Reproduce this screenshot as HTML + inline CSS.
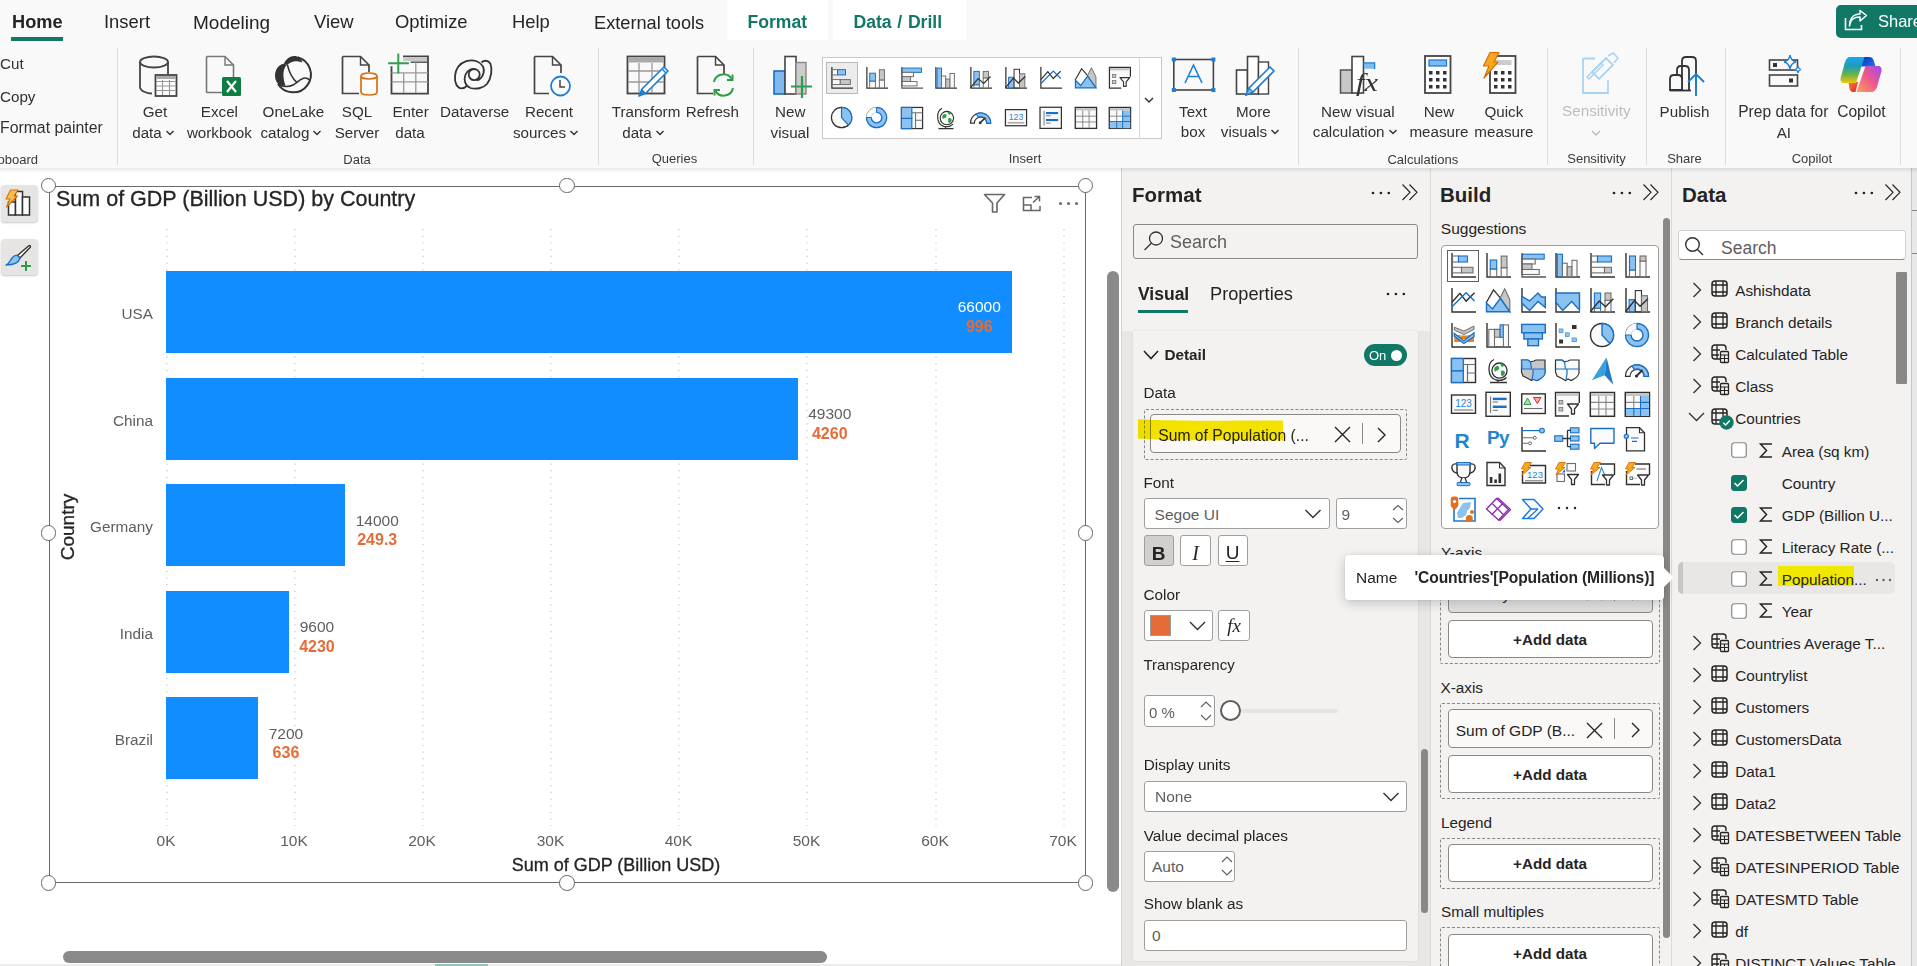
<!DOCTYPE html>
<html><head><meta charset="utf-8"><style>
html,body{margin:0;padding:0;}
body{width:1917px;height:966px;overflow:hidden;position:relative;background:#ffffff;font-family:"Liberation Sans", sans-serif;}
.t{position:absolute;white-space:nowrap;line-height:1;}
.r{position:absolute;box-sizing:border-box;}
svg.r{overflow:visible;}
</style></head><body>
<div class="r" style="left:0px;top:0px;width:1917px;height:168px;background:#f9f9f9;"></div><div class="r" style="left:727px;top:0px;width:101px;height:40px;background:#ffffff;"></div><div class="r" style="left:833px;top:0px;width:133px;height:40px;background:#ffffff;"></div><div class="t" style="top:13.39px;font-size:18.2px;color:#252423;font-weight:bold;left:12px;">Home</div><div class="r" style="left:11px;top:37px;width:52px;height:4px;background:#117865;"></div><div class="t" style="top:13.42px;font-size:18.4px;color:#252423;left:104px;">Insert</div><div class="t" style="top:12.92px;font-size:19px;color:#252423;left:193px;">Modeling</div><div class="t" style="top:13.42px;font-size:18.4px;color:#252423;left:314px;">View</div><div class="t" style="top:13.42px;font-size:18.4px;color:#252423;left:395px;">Optimize</div><div class="t" style="top:13.42px;font-size:18.4px;color:#252423;left:512px;">Help</div><div class="t" style="top:13.59px;font-size:18.2px;color:#252423;left:594px;">External tools</div><div class="t" style="top:13.70px;font-size:17.6px;color:#117865;font-weight:bold;left:747.4px;">Format</div><div class="t" style="top:13.70px;font-size:17.6px;color:#117865;font-weight:bold;left:853.5px;word-spacing:0.8px;">Data / Drill</div><div class="r" style="left:1836px;top:5px;width:90px;height:32.5px;background:#117865;border-radius:5px;"></div><svg class="r" style="left:1844px;top:10px;" width="24" height="21" viewBox="0 0 24 21"><path d="M1.5 8 V19.5 H17.5 V15" fill="none" stroke="#fff" stroke-width="1.6"/><path d="M5.5 16 C6 9 10 7 16 7 V11 L22.5 5.5 L16 0.5 V4 C9 4 5.5 9 5.5 16 Z" fill="none" stroke="#fff" stroke-width="1.5" stroke-linejoin="round"/></svg><div class="t" style="top:12.53px;font-size:16.5px;color:#ffffff;left:1878px;">Share</div><div class="t" style="top:56.13px;font-size:15.2px;color:#323130;left:0px;">Cut</div><div class="t" style="top:89.13px;font-size:15.2px;color:#323130;left:0px;">Copy</div><div class="t" style="top:120.13px;font-size:15.8px;color:#323130;left:0px;">Format painter</div><div class="t" style="top:152.50px;font-size:13px;color:#3b3a39;right:1879px;">Clipboard</div><div class="r" style="left:117px;top:48px;width:1px;height:117px;background:#dcdcdc;"></div><svg class="r" style="left:138px;top:54px;" width="42" height="44" viewBox="0 0 42 44"><path d="M2 8 V33 C2 37 9 39.5 14 39.5" fill="none" stroke="#444" stroke-width="1.8"/>
<ellipse cx="16" cy="8" rx="14" ry="5.5" fill="none" stroke="#444" stroke-width="1.8"/>
<path d="M30 8 V20" stroke="#444" stroke-width="1.8"/>
<rect x="17.5" y="21" width="21" height="21" fill="#fff" stroke="#444" stroke-width="1.8"/>
<rect x="18.5" y="22" width="19" height="3" fill="#aaa"/>
<path d="M18 27.5 H38 M18 32 H38 M18 36.5 H38 M24.5 26 V41 M31.5 26 V41" stroke="#999" stroke-width="1.2"/></svg><div class="t" style="top:103.93px;font-size:15.2px;color:#323130;left:55.00px;width:200px;text-align:center;">Get</div><div class="t" style="top:124.63px;font-size:15.2px;color:#323130;left:54.00px;width:200px;text-align:center;">data<span style="display:inline-block;width:12px;height:8px;margin-left:2px;vertical-align:0px;"><svg width="12" height="8" viewBox="0 0 12 8" style="position:relative;top:-1px"><path d="M2.5 2 L6 5.5 L9.5 2" fill="none" stroke="#323130" stroke-width="1.4"/></svg></span></div><svg class="r" style="left:204px;top:54px;" width="40" height="44" viewBox="0 0 40 44"><path d="M2.5 2.5 H21 L29.5 11 V23 M18 38.5 H2.5 Z" fill="none" stroke="#777" stroke-width="1.6"/>
<path d="M2.5 2.5 V38.5" stroke="#777" stroke-width="1.6"/><path d="M21 2.5 V11 H29.5" fill="none" stroke="#777" stroke-width="1.4"/>
<rect x="18" y="23" width="19" height="19" rx="1.5" fill="#107c41"/>
<path d="M23 27 L32 38 M32 27 L23 38" stroke="#fff" stroke-width="2.2"/></svg><div class="t" style="top:103.93px;font-size:15.2px;color:#323130;left:119.40px;width:200px;text-align:center;">Excel</div><div class="t" style="top:124.63px;font-size:15.2px;color:#323130;left:119.40px;width:200px;text-align:center;">workbook</div><svg class="r" style="left:273px;top:54px;" width="40" height="42" viewBox="0 0 40 42"><path d="M24.5 3.3 A17.8 17.8 0 1 1 5 30" fill="none" stroke="#333" stroke-width="2"/>
<path d="M10.9 9.8 C13 5 17 2 21.2 2 C25 2 28 4.5 29.5 8.5 C27 8 24 7 21 7.5 C18 8 15.5 9.5 13.8 11 Z" fill="#333"/>
<path d="M10.9 9.8 C5 11 2 16 2 22 C2 26 4 29.5 7 31.5 L12.6 31.4 C10.5 27 10 20 10.8 17 C11.2 14.5 12.2 12.5 13.8 11 Z" fill="#333"/>
<path d="M14.3 10.4 C16 18 20 25 24 28.6" fill="none" stroke="#333" stroke-width="1.6"/>
<path d="M6 31 C10 32.5 16 33 20 31 C24 29 28 24 32 24 C34 24 35.5 25 36.5 26" fill="none" stroke="#333" stroke-width="1.6"/></svg><div class="t" style="top:103.93px;font-size:15.2px;color:#323130;left:193.40px;width:200px;text-align:center;">OneLake</div><div class="t" style="top:124.63px;font-size:15.2px;color:#323130;left:192.00px;width:200px;text-align:center;">catalog<span style="display:inline-block;width:12px;height:8px;margin-left:2px;vertical-align:0px;"><svg width="12" height="8" viewBox="0 0 12 8" style="position:relative;top:-1px"><path d="M2.5 2 L6 5.5 L9.5 2" fill="none" stroke="#323130" stroke-width="1.4"/></svg></span></div><svg class="r" style="left:340px;top:54px;" width="40" height="44" viewBox="0 0 40 44"><path d="M2.5 2.5 H20.5 L29 11 V18 M19 39.5 H2.5 V2.5" fill="none" stroke="#444" stroke-width="1.7"/><path d="M20.5 2.5 V11 H29" fill="none" stroke="#444" stroke-width="1.4"/>
<path d="M21 22 V38 C21 42 37 42 37 38 V22" fill="#fff" stroke="#d9720f" stroke-width="1.7"/>
<ellipse cx="29" cy="22" rx="8" ry="3" fill="#fff" stroke="#d9720f" stroke-width="1.7"/></svg><div class="t" style="top:103.93px;font-size:15.2px;color:#323130;left:257.00px;width:200px;text-align:center;">SQL</div><div class="t" style="top:125.13px;font-size:15.2px;color:#323130;left:257.00px;width:200px;text-align:center;">Server</div><svg class="r" style="left:386px;top:52px;" width="44" height="44" viewBox="0 0 44 44"><path d="M17 4.3 H42 V41.6 H5.5 V14.2" fill="none" stroke="#444" stroke-width="1.8"/>
<rect x="17" y="5.3" width="24" height="3.8" fill="#c8c8c8"/>
<path d="M24.7 10.2 H42" stroke="#555" stroke-width="1.5"/>
<path d="M5.5 20.8 H42 M5.5 29.9 H42 M17.7 20.8 V41 M29.8 10.2 V41" stroke="#999" stroke-width="1.3"/>
<path d="M12.3 1.4 V21.5 M2.2 11.3 H22.9" stroke="#2e9e48" stroke-width="1.9"/></svg><div class="t" style="top:103.93px;font-size:15.2px;color:#323130;left:310.60px;width:200px;text-align:center;">Enter</div><div class="t" style="top:125.13px;font-size:15.2px;color:#323130;left:310.00px;width:200px;text-align:center;">data</div><svg class="r" style="left:453px;top:58px;" width="42" height="34" viewBox="0 0 42 34"><path d="M13.9 27.9 C11 31 6 31.5 3.5 27 C1 22 1.5 14 5 9 C9 3.5 17 1 23 3 C29 5 32 10 30.5 15 C29.5 19 27 21.5 24 22.5" fill="none" stroke="#333" stroke-width="1.8"/>
<path d="M28.5 4.5 C31 2 35.5 2 37.5 6 C39.5 11 38.5 20 34 26 C30 30.5 23 31.5 17.5 30 C12 28 10.5 22 12.5 16.5 C14.5 12 19 10 23 11.5" fill="none" stroke="#333" stroke-width="1.8"/>
<circle cx="21.2" cy="16.6" r="5.5" fill="none" stroke="#333" stroke-width="1.8"/></svg><div class="t" style="top:103.93px;font-size:15.2px;color:#323130;left:374.70px;width:200px;text-align:center;">Dataverse</div><svg class="r" style="left:532px;top:54px;" width="42" height="44" viewBox="0 0 42 44"><path d="M2.5 2.5 H20.5 L29 11 V19 M17 39.5 H2.5 V2.5" fill="none" stroke="#444" stroke-width="1.7"/><path d="M20.5 2.5 V11 H29" fill="none" stroke="#444" stroke-width="1.4"/>
<circle cx="28.5" cy="32" r="9.5" fill="#fff" stroke="#1c7ed6" stroke-width="1.8"/>
<path d="M28 26 V33 H33" fill="none" stroke="#444" stroke-width="1.5"/></svg><div class="t" style="top:103.93px;font-size:15.2px;color:#323130;left:449.00px;width:200px;text-align:center;">Recent</div><div class="t" style="top:125.13px;font-size:15.2px;color:#323130;left:446.50px;width:200px;text-align:center;">sources<span style="display:inline-block;width:12px;height:8px;margin-left:2px;vertical-align:0px;"><svg width="12" height="8" viewBox="0 0 12 8" style="position:relative;top:-1px"><path d="M2.5 2 L6 5.5 L9.5 2" fill="none" stroke="#323130" stroke-width="1.4"/></svg></span></div><div class="t" style="top:152.50px;font-size:13px;color:#3b3a39;left:257.00px;width:200px;text-align:center;">Data</div><div class="r" style="left:597.6px;top:48px;width:1px;height:117px;background:#dcdcdc;"></div><svg class="r" style="left:625px;top:54px;" width="46" height="44" viewBox="0 0 46 44"><rect x="2.5" y="2.5" width="37" height="37" fill="none" stroke="#444" stroke-width="1.8"/>
<rect x="3.5" y="3.5" width="35" height="5" fill="#aaa"/>
<path d="M3 17 H39 M3 28 H39 M14 9 V39 M27 9 V39" stroke="#999" stroke-width="1.3"/>
<path d="M14 42 L17 35 L39 13 L43 17 L21 39 Z" fill="#fff" stroke="#1c7ed6" stroke-width="1.7" stroke-linejoin="round"/>
<path d="M14 42 L17 35 L21 39 Z" fill="#1c7ed6"/><path d="M37 15 L41 19" stroke="#1c7ed6" stroke-width="1.5"/></svg><div class="t" style="top:103.53px;font-size:15.2px;color:#323130;left:546.00px;width:200px;text-align:center;">Transform</div><div class="t" style="top:124.63px;font-size:15.2px;color:#323130;left:544.00px;width:200px;text-align:center;">data<span style="display:inline-block;width:12px;height:8px;margin-left:2px;vertical-align:0px;"><svg width="12" height="8" viewBox="0 0 12 8" style="position:relative;top:-1px"><path d="M2.5 2 L6 5.5 L9.5 2" fill="none" stroke="#323130" stroke-width="1.4"/></svg></span></div><svg class="r" style="left:695px;top:54px;" width="40" height="44" viewBox="0 0 40 44"><path d="M2.5 2.5 H20.5 L29 11 V20 M18 39.5 H2.5 V2.5" fill="none" stroke="#444" stroke-width="1.7"/><path d="M20.5 2.5 V11 H29" fill="none" stroke="#444" stroke-width="1.4"/>
<path d="M19 28 A9.5 9.5 0 0 1 37 26 M38 34 A9.5 9.5 0 0 1 20 36" fill="none" stroke="#2e9e48" stroke-width="2"/>
<path d="M32 26 H37.5 V20.5 M25 36 H19.5 V41.5" fill="none" stroke="#2e9e48" stroke-width="2"/></svg><div class="t" style="top:103.53px;font-size:15.2px;color:#323130;left:612.30px;width:200px;text-align:center;">Refresh</div><div class="t" style="top:152.40px;font-size:13px;color:#3b3a39;left:574.40px;width:200px;text-align:center;">Queries</div><div class="r" style="left:752.7px;top:48px;width:1px;height:117px;background:#dcdcdc;"></div><svg class="r" style="left:772px;top:54px;" width="44" height="46" viewBox="0 0 44 46"><rect x="2" y="17" width="11" height="23" fill="#7fb9ee" stroke="#1c6cc1" stroke-width="1.6"/>
<rect x="13" y="2.5" width="11" height="37.5" fill="#fff" stroke="#444" stroke-width="1.6"/>
<rect x="24" y="8.5" width="10" height="31.5" fill="#ccc" stroke="#888" stroke-width="1.4"/>
<path d="M30 22 V44 M19 32.5 H40" stroke="#2e9e48" stroke-width="2.2"/></svg><div class="t" style="top:103.53px;font-size:15.2px;color:#323130;left:690.30px;width:200px;text-align:center;">New</div><div class="t" style="top:124.63px;font-size:15.2px;color:#323130;left:690.00px;width:200px;text-align:center;">visual</div><div class="r" style="left:822px;top:57px;width:340px;height:82px;background:#ffffff;border:1px solid #c8c8c8;"></div><div class="r" style="left:1139px;top:57px;width:1px;height:82px;background:#d8d8d8;"></div><div class="r" style="left:826px;top:62px;width:32px;height:31.5px;background:#ececec;border:1px solid #b8b8b8;"></div><svg class="r" style="left:1143px;top:96px;" width="12" height="8" viewBox="0 0 12 8"><path d="M2 2 L6 6 L10 2" fill="none" stroke="#333" stroke-width="1.5"/></svg><div class="t" style="top:152.40px;font-size:13px;color:#3b3a39;left:925.00px;width:200px;text-align:center;">Insert</div><svg class="r" style="left:1171px;top:57px;" width="46" height="36" viewBox="0 0 46 36"><rect x="2.8" y="2.5" width="39.6" height="30.5" fill="none" stroke="#444" stroke-width="1.6"/>
<rect x="0.8" y="0.5" width="4" height="4" fill="#1c7ed6"/><rect x="40.4" y="0.5" width="4" height="4" fill="#1c7ed6"/>
<rect x="0.8" y="31" width="4" height="4" fill="#1c7ed6"/><rect x="40.4" y="31" width="4" height="4" fill="#1c7ed6"/>
<path d="M14 26 L22.5 8 L31 26 M17 19.5 H28" fill="none" stroke="#1c7ed6" stroke-width="1.6"/></svg><div class="t" style="top:104.13px;font-size:15.2px;color:#323130;left:1093.00px;width:200px;text-align:center;">Text</div><div class="t" style="top:124.03px;font-size:15.2px;color:#323130;left:1093.00px;width:200px;text-align:center;">box</div><svg class="r" style="left:1235px;top:55px;" width="42" height="42" viewBox="0 0 42 42"><rect x="1.5" y="15" width="11" height="24" fill="#fff" stroke="#444" stroke-width="1.6"/>
<rect x="12.5" y="1.5" width="11" height="37.5" fill="#fff" stroke="#444" stroke-width="1.6"/>
<rect x="23.5" y="7" width="10" height="32" fill="#fff" stroke="#444" stroke-width="1.4"/>
<path d="M11 40 L14 33 L35 12 L39 16 L18 37 Z" fill="#fff" stroke="#1c7ed6" stroke-width="1.7" stroke-linejoin="round"/>
<path d="M11 40 L14 33 L18 37 Z" fill="#7fb9ee" stroke="#1c7ed6" stroke-width="1.2"/></svg><div class="t" style="top:104.13px;font-size:15.2px;color:#323130;left:1153.40px;width:200px;text-align:center;">More</div><div class="t" style="top:124.03px;font-size:15.2px;color:#323130;left:1151.00px;width:200px;text-align:center;">visuals<span style="display:inline-block;width:12px;height:8px;margin-left:2px;vertical-align:0px;"><svg width="12" height="8" viewBox="0 0 12 8" style="position:relative;top:-1px"><path d="M2.5 2 L6 5.5 L9.5 2" fill="none" stroke="#323130" stroke-width="1.4"/></svg></span></div><div class="r" style="left:1297.8px;top:48px;width:1px;height:117px;background:#dcdcdc;"></div><svg class="r" style="left:1339px;top:55px;" width="44" height="42" viewBox="0 0 44 42"><rect x="1.5" y="15" width="11.5" height="23" fill="#c8c8c8" stroke="#555" stroke-width="1.5"/>
<rect x="13" y="1.5" width="11.5" height="36.5" fill="#fff" stroke="#444" stroke-width="1.6"/>
<path d="M24.5 8 H35.5 V14" fill="#7fb9ee" stroke="#1c7ed6" stroke-width="1.5"/>
<rect x="25" y="8.7" width="10" height="5" fill="#7fb9ee"/>
<text x="17" y="36" font-family="Liberation Serif" font-style="italic" font-size="25" fill="#333" textLength="22" lengthAdjust="spacingAndGlyphs">fx</text></svg><div class="t" style="top:104.13px;font-size:15.2px;color:#323130;left:1257.80px;width:200px;text-align:center;">New visual</div><div class="t" style="top:124.03px;font-size:15.2px;color:#323130;left:1255.70px;width:200px;text-align:center;">calculation<span style="display:inline-block;width:12px;height:8px;margin-left:2px;vertical-align:0px;"><svg width="12" height="8" viewBox="0 0 12 8" style="position:relative;top:-1px"><path d="M2.5 2 L6 5.5 L9.5 2" fill="none" stroke="#323130" stroke-width="1.4"/></svg></span></div><svg class="r" style="left:1423px;top:54px;" width="30" height="42" viewBox="0 0 30 42"><rect x="2" y="2" width="25.5" height="37" fill="#fff" stroke="#444" stroke-width="1.8"/>
<rect x="6" y="6" width="17.5" height="6" fill="#7fb9ee" stroke="#1c7ed6" stroke-width="1.3"/>
<g fill="#333"><rect x="6" y="17" width="3.5" height="3.5"/><rect x="13" y="17" width="3.5" height="3.5"/><rect x="20" y="17" width="3.5" height="3.5"/>
<rect x="6" y="24" width="3.5" height="3.5"/><rect x="13" y="24" width="3.5" height="3.5"/><rect x="20" y="24" width="3.5" height="3.5"/>
<rect x="6" y="31" width="3.5" height="3.5"/><rect x="13" y="31" width="3.5" height="3.5"/><rect x="20" y="31" width="3.5" height="3.5"/></g></svg><div class="t" style="top:104.13px;font-size:15.2px;color:#323130;left:1339.00px;width:200px;text-align:center;">New</div><div class="t" style="top:124.03px;font-size:15.2px;color:#323130;left:1339.00px;width:200px;text-align:center;">measure</div><svg class="r" style="left:1481px;top:52px;" width="38" height="44" viewBox="0 0 38 44"><rect x="9" y="4" width="25.5" height="37" fill="#fff" stroke="#444" stroke-width="1.8"/>
<rect x="13" y="8" width="17.5" height="5" fill="#ccc"/>
<g fill="#333"><rect x="13" y="19" width="3.5" height="3.5"/><rect x="20" y="19" width="3.5" height="3.5"/><rect x="27" y="19" width="3.5" height="3.5"/>
<rect x="13" y="26" width="3.5" height="3.5"/><rect x="20" y="26" width="3.5" height="3.5"/><rect x="27" y="26" width="3.5" height="3.5"/>
<rect x="13" y="33" width="3.5" height="3.5"/><rect x="20" y="33" width="3.5" height="3.5"/><rect x="27" y="33" width="3.5" height="3.5"/></g>
<path d="M9 0.5 H18 L13 10 H17 L3 26 L8 14 H2.5 Z" fill="#f7a81b" stroke="#d96d0a" stroke-width="1.2" stroke-linejoin="round"/></svg><div class="t" style="top:104.13px;font-size:15.2px;color:#323130;left:1403.90px;width:200px;text-align:center;">Quick</div><div class="t" style="top:124.03px;font-size:15.2px;color:#323130;left:1403.90px;width:200px;text-align:center;">measure</div><div class="t" style="top:152.60px;font-size:13px;color:#3b3a39;left:1322.80px;width:200px;text-align:center;">Calculations</div><div class="r" style="left:1546.9px;top:48px;width:1px;height:117px;background:#dcdcdc;"></div><svg class="r" style="left:1580px;top:52px;" width="40" height="44" viewBox="0 0 40 44"><path d="M3 6.5 H15 M28 28 V41 H3 V6.5" fill="none" stroke="#a9d3f2" stroke-width="1.8"/>
<path d="M12 20 L26 6 L33 13 L19 27 Z" fill="none" stroke="#a9d3f2" stroke-width="1.8"/>
<path d="M7 25 L21 11 L23 13 L9 27Z" fill="none" stroke="#a9d3f2" stroke-width="1.5"/>
<path d="M28 4 L33 1 L38 6 L34 11" fill="none" stroke="#a9d3f2" stroke-width="1.6"/></svg><div class="t" style="top:103.13px;font-size:15.2px;color:#bdbdbd;left:1496.30px;width:200px;text-align:center;">Sensitivity</div><svg class="r" style="left:1590px;top:129px;" width="12" height="8" viewBox="0 0 12 8"><path d="M2 2 L6 6 L10 2" fill="none" stroke="#bdbdbd" stroke-width="1.5"/></svg><div class="t" style="top:152.20px;font-size:13px;color:#3b3a39;left:1496.50px;width:200px;text-align:center;">Sensitivity</div><div class="r" style="left:1645.6px;top:48px;width:1px;height:117px;background:#dcdcdc;"></div><svg class="r" style="left:1668px;top:54px;" width="40" height="44" viewBox="0 0 40 44"><path d="M14 36 V7 C14 4 15.5 3 18 3 H24 C26.5 3 28 4 28 7 V36" fill="none" stroke="#333" stroke-width="1.8"/>
<path d="M9 36 V16 C9 13 10.5 12 13 12 H17 C19 12 21 13 21 16 V36" fill="none" stroke="#333" stroke-width="1.8"/>
<path d="M2 36 V25 C2 22 3.5 21 6 21 H10 C12.5 21 14 22 14 25 V36 Z" fill="#f9f9f9" stroke="#333" stroke-width="1.8"/>
<path d="M2 36.5 H23" stroke="#333" stroke-width="1.8"/>
<path d="M28 42 V20 M20 28 L28 20 L36 28" fill="none" stroke="#1c7ed6" stroke-width="1.9"/></svg><div class="t" style="top:104.13px;font-size:15.2px;color:#323130;left:1584.50px;width:200px;text-align:center;">Publish</div><div class="t" style="top:152.20px;font-size:13px;color:#3b3a39;left:1584.50px;width:200px;text-align:center;">Share</div><div class="r" style="left:1724.5px;top:48px;width:1px;height:117px;background:#dcdcdc;"></div><svg class="r" style="left:1768px;top:54px;" width="36" height="36" viewBox="0 0 36 36"><rect x="1.5" y="6" width="28" height="10" fill="none" stroke="#444" stroke-width="1.6"/>
<rect x="1.5" y="21" width="28" height="11" fill="none" stroke="#444" stroke-width="1.6"/>
<rect x="5" y="9" width="4" height="4" fill="#333"/><rect x="21" y="24.5" width="4" height="4" fill="#333"/>
<path d="M22 1 Q23 7 28 8 Q23 9 22 15 Q21 9 16 8 Q21 7 22 1 Z" fill="#f9f9f9" stroke="#1c7ed6" stroke-width="1.4"/>
<path d="M30 12 Q30.5 15 33 15.5 Q30.5 16 30 19 Q29.5 16 27 15.5 Q29.5 15 30 12Z" fill="#f9f9f9" stroke="#1c7ed6" stroke-width="1.2"/></svg><div class="t" style="top:103.79px;font-size:15.6px;color:#323130;left:1738.2px;">Prep data for</div><div class="t" style="top:124.83px;font-size:15.2px;color:#323130;left:1683.90px;width:200px;text-align:center;">AI</div><svg class="r" style="left:1840px;top:57px" width="42" height="36" viewBox="0 0 42 36"><defs>
<linearGradient id="cpa" x1="0" y1="0" x2="0" y2="1"><stop offset="0" stop-color="#1aa6f4"/><stop offset=".35" stop-color="#1f9bb8"/><stop offset=".65" stop-color="#62b34c"/><stop offset="1" stop-color="#f2c40c"/></linearGradient>
<linearGradient id="cpb" x1="1" y1="0" x2="0" y2="1"><stop offset="0" stop-color="#9b4bf0"/><stop offset=".5" stop-color="#f0588c"/><stop offset="1" stop-color="#fba35a"/></linearGradient>
<linearGradient id="cpc" x1="0" y1="0" x2="1" y2="1"><stop offset="0" stop-color="#0c2fc6"/><stop offset="1" stop-color="#1b78e8"/></linearGradient>
<linearGradient id="cpd" x1="0" y1="0" x2="1" y2="1"><stop offset="0" stop-color="#ff7a3a"/><stop offset="1" stop-color="#d8282e"/></linearGradient></defs>
<path d="M22 0 H29 C32 0 33.5 2 34 4.5 L35.5 9.5 H20 Z" fill="url(#cpc)"/>
<path d="M8.5 25 H18 L15.5 35 H13 C11 35 10 33.5 9.5 31.5 Z" fill="url(#cpd)"/>
<path d="M10 0 H24.5 L16 26 H4 C1.5 26 0 24 0.5 21.5 L5 5 C6 2 7.5 0 10 0 Z" fill="url(#cpa)"/>
<path d="M25.5 9 H38 C40.5 9 42 11 41.5 14 L37 30 C36 33 34 35 31 35 H16.5 Z" fill="url(#cpb)"/>
</svg><div class="t" style="top:103.79px;font-size:15.6px;color:#323130;right:31.299999999999955px;">Copilot</div><div class="t" style="top:152.20px;font-size:13px;color:#3b3a39;left:1711.90px;width:200px;text-align:center;">Copilot</div><div class="r" style="left:1899.5px;top:48px;width:1px;height:117px;background:#dcdcdc;"></div><div class="r" style="left:1912px;top:168px;width:5px;height:798px;background:#e6e6e6;"></div><div class="r" style="left:1px;top:185px;width:36.5px;height:37px;background:#e6e5e4;border-radius:4px;box-shadow:0 1px 2px rgba(0,0,0,.22);"></div><div class="r" style="left:1px;top:238.5px;width:36.5px;height:36.5px;background:#e6e5e4;border-radius:4px;box-shadow:0 1px 2px rgba(0,0,0,.22);"></div><svg class="r" style="left:4px;top:189px;" width="30" height="30" viewBox="0 0 30 30"><rect x="4.5" y="13" width="7" height="13" fill="#fff" stroke="#323130" stroke-width="1.5"/><rect x="11.5" y="2.5" width="7" height="23.5" fill="#fff" stroke="#323130" stroke-width="1.5"/><rect x="18.5" y="8" width="7" height="18" fill="#fff" stroke="#323130" stroke-width="1.5"/><path d="M6.5 1 H14 L10 7 H13.5 L2.5 18 L6 10 H2 Z" fill="#f7c04a" stroke="#d96d0a" stroke-width="1.1" stroke-linejoin="round"/></svg><svg class="r" style="left:4px;top:243px;" width="30" height="30" viewBox="0 0 30 30"><path d="M24.5 3 C26 2 27 3 26 4.5 L16 15 L13.5 12.5 Z" fill="#fff" stroke="#323130" stroke-width="1.4" stroke-linejoin="round"/><path d="M13.5 12.5 L16 15 C15 19 12 22 2 22 C6 20 6 17 8 15 C9.5 13 11.5 12 13.5 12.5 Z" fill="#8cc2ef" stroke="#1a6fc4" stroke-width="1.3" stroke-linejoin="round"/><path d="M22 18 V28 M17 23 H27" stroke="#2e9e48" stroke-width="2"/></svg><svg class="r" style="left:983px;top:193px;" width="24" height="21" viewBox="0 0 24 21"><path d="M1.5 1.5 H21.5 L14 10 V19 H9.5 V10 Z" fill="none" stroke="#666" stroke-width="1.6" stroke-linejoin="round"/></svg><svg class="r" style="left:1021px;top:195px;" width="21" height="18" viewBox="0 0 21 18"><path d="M11 2.5 H2.5 V15.5 H19 V11" fill="none" stroke="#666" stroke-width="1.5"/><path d="M2.5 10 H10 V15.5" fill="none" stroke="#666" stroke-width="1.5"/><path d="M12 7.5 L18.5 1.5 M13.5 1.5 H18.5 V6.5" fill="none" stroke="#666" stroke-width="1.5"/></svg><div class="r" style="left:1058.8px;top:201.6px;width:3.4px;height:3.4px;background:#666;border-radius:50%;"></div><div class="r" style="left:1066.7px;top:201.6px;width:3.4px;height:3.4px;background:#666;border-radius:50%;"></div><div class="r" style="left:1074.6px;top:201.6px;width:3.4px;height:3.4px;background:#666;border-radius:50%;"></div><div class="r" style="left:49px;top:186px;width:1037px;height:697px;background:none;border:1px solid #6b6b6b;"></div><div class="t" style="top:189.10px;font-size:21.5px;color:#252423;left:56px;-webkit-text-stroke:0.3px #252423;">Sum of GDP (Billion USD) by Country</div><svg class="r" style="left:165.5px;top:229px" width="2" height="597"><line x1="1" y1="0" x2="1" y2="597" stroke="#c8c6c4" stroke-width="1.2" stroke-dasharray="1.2 5.5"/></svg><div class="t" style="top:832.88px;font-size:15.5px;color:#605e5c;left:136.00px;width:60px;text-align:center;">0K</div><svg class="r" style="left:293.5px;top:229px" width="2" height="597"><line x1="1" y1="0" x2="1" y2="597" stroke="#c8c6c4" stroke-width="1.2" stroke-dasharray="1.2 5.5"/></svg><div class="t" style="top:832.88px;font-size:15.5px;color:#605e5c;left:264.00px;width:60px;text-align:center;">10K</div><svg class="r" style="left:421.5px;top:229px" width="2" height="597"><line x1="1" y1="0" x2="1" y2="597" stroke="#c8c6c4" stroke-width="1.2" stroke-dasharray="1.2 5.5"/></svg><div class="t" style="top:832.88px;font-size:15.5px;color:#605e5c;left:392.00px;width:60px;text-align:center;">20K</div><svg class="r" style="left:550.0px;top:229px" width="2" height="597"><line x1="1" y1="0" x2="1" y2="597" stroke="#c8c6c4" stroke-width="1.2" stroke-dasharray="1.2 5.5"/></svg><div class="t" style="top:832.88px;font-size:15.5px;color:#605e5c;left:520.50px;width:60px;text-align:center;">30K</div><svg class="r" style="left:678.0px;top:229px" width="2" height="597"><line x1="1" y1="0" x2="1" y2="597" stroke="#c8c6c4" stroke-width="1.2" stroke-dasharray="1.2 5.5"/></svg><div class="t" style="top:832.88px;font-size:15.5px;color:#605e5c;left:648.50px;width:60px;text-align:center;">40K</div><svg class="r" style="left:806.0px;top:229px" width="2" height="597"><line x1="1" y1="0" x2="1" y2="597" stroke="#c8c6c4" stroke-width="1.2" stroke-dasharray="1.2 5.5"/></svg><div class="t" style="top:832.88px;font-size:15.5px;color:#605e5c;left:776.50px;width:60px;text-align:center;">50K</div><svg class="r" style="left:934.5px;top:229px" width="2" height="597"><line x1="1" y1="0" x2="1" y2="597" stroke="#c8c6c4" stroke-width="1.2" stroke-dasharray="1.2 5.5"/></svg><div class="t" style="top:832.88px;font-size:15.5px;color:#605e5c;left:905.00px;width:60px;text-align:center;">60K</div><svg class="r" style="left:1062.5px;top:229px" width="2" height="597"><line x1="1" y1="0" x2="1" y2="597" stroke="#c8c6c4" stroke-width="1.2" stroke-dasharray="1.2 5.5"/></svg><div class="t" style="top:832.88px;font-size:15.5px;color:#605e5c;left:1033.00px;width:60px;text-align:center;">70K</div><div class="t" style="top:856.06px;font-size:18px;color:#252423;left:416.00px;width:400px;text-align:center;-webkit-text-stroke:0.3px #252423;">Sum of GDP (Billion USD)</div><div class="r" style="left:166px;top:271px;width:845.5px;height:82px;background:#118dff;"></div><div class="t" style="top:306.05px;font-size:15.3px;color:#605e5c;right:1764px;">USA</div><div class="t" style="top:298.88px;font-size:15.5px;color:#ffffff;left:939.30px;width:80px;text-align:center;">66000</div><div class="t" style="top:319.46px;font-size:16px;color:#e66c37;font-weight:bold;left:939.30px;width:80px;text-align:center;">996</div><div class="r" style="left:166px;top:377.5px;width:631.5px;height:82px;background:#118dff;"></div><div class="t" style="top:412.55px;font-size:15.3px;color:#605e5c;right:1764px;">China</div><div class="t" style="top:406.38px;font-size:15.5px;color:#605e5c;left:789.75px;width:80px;text-align:center;">49300</div><div class="t" style="top:425.96px;font-size:16px;color:#e66c37;font-weight:bold;left:789.75px;width:80px;text-align:center;">4260</div><div class="r" style="left:166px;top:484px;width:179px;height:82px;background:#118dff;"></div><div class="t" style="top:519.05px;font-size:15.3px;color:#605e5c;right:1764px;">Germany</div><div class="t" style="top:512.88px;font-size:15.5px;color:#605e5c;left:337.25px;width:80px;text-align:center;">14000</div><div class="t" style="top:532.46px;font-size:16px;color:#e66c37;font-weight:bold;left:337.25px;width:80px;text-align:center;">249.3</div><div class="r" style="left:166px;top:590.5px;width:123px;height:82px;background:#118dff;"></div><div class="t" style="top:625.55px;font-size:15.3px;color:#605e5c;right:1764px;">India</div><div class="t" style="top:619.38px;font-size:15.5px;color:#605e5c;left:276.94px;width:80px;text-align:center;">9600</div><div class="t" style="top:638.96px;font-size:16px;color:#e66c37;font-weight:bold;left:276.94px;width:80px;text-align:center;">4230</div><div class="r" style="left:166px;top:697px;width:92px;height:82px;background:#118dff;"></div><div class="t" style="top:732.05px;font-size:15.3px;color:#605e5c;right:1764px;">Brazil</div><div class="t" style="top:725.88px;font-size:15.5px;color:#605e5c;left:245.94px;width:80px;text-align:center;">7200</div><div class="t" style="top:745.46px;font-size:16px;color:#e66c37;font-weight:bold;left:245.94px;width:80px;text-align:center;">636</div><div class="t" style="left:67px;top:527px;font-size:19px;color:#252423;transform:translate(-50%,-50%) rotate(-90deg);-webkit-text-stroke:0.3px #252423;">Country</div><div class="r" style="left:40.7px;top:177.7px;width:15.6px;height:15.6px;background:#ffffff;border:1.5px solid #666;border-radius:50%;"></div><div class="r" style="left:559.2px;top:177.7px;width:15.6px;height:15.6px;background:#ffffff;border:1.5px solid #666;border-radius:50%;"></div><div class="r" style="left:1077.7px;top:177.7px;width:15.6px;height:15.6px;background:#ffffff;border:1.5px solid #666;border-radius:50%;"></div><div class="r" style="left:40.7px;top:525.2px;width:15.6px;height:15.6px;background:#ffffff;border:1.5px solid #666;border-radius:50%;"></div><div class="r" style="left:1077.7px;top:525.2px;width:15.6px;height:15.6px;background:#ffffff;border:1.5px solid #666;border-radius:50%;"></div><div class="r" style="left:40.7px;top:875.2px;width:15.6px;height:15.6px;background:#ffffff;border:1.5px solid #666;border-radius:50%;"></div><div class="r" style="left:559.2px;top:875.2px;width:15.6px;height:15.6px;background:#ffffff;border:1.5px solid #666;border-radius:50%;"></div><div class="r" style="left:1077.7px;top:875.2px;width:15.6px;height:15.6px;background:#ffffff;border:1.5px solid #666;border-radius:50%;"></div><div class="r" style="left:0px;top:964px;width:1121px;height:2px;background:#ededed;"></div><div class="r" style="left:435px;top:964px;width:53px;height:2px;background:#8fc5bb;"></div><div class="r" style="left:63px;top:951px;width:764px;height:12px;background:#8a8a8a;border-radius:6px;"></div><div class="r" style="left:1107px;top:271px;width:12px;height:621px;background:#8a8a8a;border-radius:6px;"></div><div class="r" style="left:1121px;top:168px;width:309px;height:798px;background:#f3f2f1;border-left:1px solid #d2d0ce;"></div><div class="r" style="left:1122px;top:331px;width:308px;height:635px;background:#e8e7e6;"></div><div class="r" style="left:1132.5px;top:331px;width:285px;height:630px;background:#f3f2f1;border-radius:0 0 4px 4px;box-shadow:0 0 2px rgba(0,0,0,.12);"></div><div class="t" style="top:184.65px;font-size:20.5px;color:#252423;font-weight:bold;left:1132px;">Format</div><svg class="r" style="left:1369.5px;top:190.4px;" width="21.8" height="6" viewBox="0 0 21.8 6"><circle cx="3.0" cy="3" r="1.35" fill="#252423"/><circle cx="10.9" cy="3" r="1.35" fill="#252423"/><circle cx="18.8" cy="3" r="1.35" fill="#252423"/></svg><svg class="r" style="left:1401px;top:183.5px;" width="18" height="18" viewBox="0 0 18 18"><path d="M1.5 0.5 L9 8.3 L1.5 16 M8.5 0.5 L16 8.3 L8.5 16" fill="none" stroke="#252423" stroke-width="1.15"/></svg><div class="r" style="left:1132.5px;top:223.5px;width:285.5px;height:35px;background:#f3f2f1;border:1px solid #8a8886;border-radius:3px;"></div><svg class="r" style="left:1143px;top:230px;" width="22" height="22" viewBox="0 0 22 22"><circle cx="13" cy="8.5" r="6.5" fill="none" stroke="#323130" stroke-width="1.3"/><path d="M8.5 13 L1.5 20" stroke="#323130" stroke-width="1.3"/></svg><div class="t" style="top:233.26px;font-size:18px;color:#605e5c;left:1170px;">Search</div><div class="t" style="top:285.69px;font-size:17.5px;color:#252423;font-weight:bold;left:1138px;">Visual</div><div class="r" style="left:1138px;top:310px;width:50px;height:2.5px;background:#117865;"></div><div class="t" style="top:285.09px;font-size:18.2px;color:#252423;left:1210px;">Properties</div><svg class="r" style="left:1385px;top:290.5px;" width="21.8" height="6" viewBox="0 0 21.8 6"><circle cx="3.0" cy="3" r="1.35" fill="#252423"/><circle cx="10.9" cy="3" r="1.35" fill="#252423"/><circle cx="18.8" cy="3" r="1.35" fill="#252423"/></svg><svg class="r" style="left:1142px;top:349px;" width="18" height="12" viewBox="0 0 18 12"><path d="M2 2 L9 9.5 L16 2" fill="none" stroke="#252423" stroke-width="1.6"/></svg><div class="t" style="top:347.25px;font-size:15.3px;color:#252423;font-weight:bold;left:1164.4px;">Detail</div><div class="r" style="left:1364.4px;top:344.3px;width:42.6px;height:21.7px;background:#117865;border-radius:11px;"></div><div class="t" style="top:349.00px;font-size:13px;color:#ffffff;left:1369px;">On</div><div class="r" style="left:1391px;top:350px;width:11px;height:11px;background:#ffffff;border-radius:50%;"></div><div class="t" style="top:384.85px;font-size:15.3px;color:#252423;left:1143.5px;">Data</div><div class="r" style="left:1143.5px;top:408.5px;width:263px;height:51px;background:none;border:1px dashed #8a8886;border-radius:2px;"></div><div class="r" style="left:1150.3px;top:414.4px;width:250.3px;height:38.8px;background:#faf9f8;border:1px solid #8a8886;border-radius:4px;"></div><div class="t" style="top:427.74px;font-size:15.67px;color:#252423;left:1158.3px;">Sum of Population (...</div><svg class="r" style="left:1136px;top:417px;mix-blend-mode:multiply" width="150" height="26" viewBox="0 0 150 26"><path d="M2 2.2 C30 3.5 60 4 147 3.5 L147 23.5 C100 23 60 23.5 30 23 C15 22.5 8 22 2 21.8 Z" fill="#f8e800"/></svg><svg class="r" style="left:1333px;top:425px;" width="20" height="20" viewBox="0 0 20 20"><path d="M2 2 L17 17 M17 2 L2 17" stroke="#252423" stroke-width="1.4"/></svg><div class="r" style="left:1362px;top:423px;width:1px;height:21px;background:#8a8886;"></div><svg class="r" style="left:1375px;top:426px;" width="14" height="18" viewBox="0 0 14 18"><path d="M3 2 L10 9 L3 16" fill="none" stroke="#252423" stroke-width="1.4"/></svg><div class="t" style="top:474.85px;font-size:15.3px;color:#252423;left:1143.5px;">Font</div><div class="r" style="left:1143.5px;top:497.8px;width:186px;height:31px;background:#ffffff;border:1px solid #a19f9d;border-radius:3px;"></div><div class="t" style="top:506.58px;font-size:15.5px;color:#605e5c;left:1154.6px;">Segoe UI</div><svg class="r" style="left:1304px;top:508px;" width="18" height="12" viewBox="0 0 18 12"><path d="M1.5 2 L9 9.5 L16.5 2" fill="none" stroke="#323130" stroke-width="1.4"/></svg><div class="r" style="left:1336px;top:497.8px;width:70.6px;height:31px;background:#ffffff;border:1px solid #a19f9d;border-radius:3px;"></div><div class="t" style="top:506.58px;font-size:15.5px;color:#605e5c;left:1341.4px;">9</div><svg class="r" style="left:1391px;top:503px;" width="14" height="22" viewBox="0 0 14 22"><path d="M2 7 L7 2.5 L12 7 M2 15 L7 19.5 L12 15" fill="none" stroke="#605e5c" stroke-width="1.1"/></svg><div class="r" style="left:1143.5px;top:535.4px;width:30.3px;height:31px;background:#d2d0ce;border:1px solid #a19f9d;border-radius:3px;"></div><div class="t" style="top:543.92px;font-size:19px;color:#252423;font-weight:bold;left:1143.60px;width:30px;text-align:center;">B</div><div class="r" style="left:1180px;top:535.4px;width:31px;height:31px;background:#ffffff;border:1px solid #a19f9d;border-radius:3px;"></div><div class="t" style="top:543.07px;font-size:20px;color:#252423;left:1180.50px;width:30px;text-align:center;font-family:'Liberation Serif',serif;font-style:italic;">I</div><div class="r" style="left:1217.5px;top:535.4px;width:30.1px;height:31px;background:#ffffff;border:1px solid #a19f9d;border-radius:3px;"></div><div class="t" style="top:542.92px;font-size:19px;color:#252423;left:1217.60px;width:30px;text-align:center;text-decoration:underline;text-decoration-thickness:1px;text-underline-offset:2px;">U</div><div class="t" style="top:586.85px;font-size:15.3px;color:#252423;left:1143.5px;">Color</div><div class="r" style="left:1143.5px;top:610px;width:69px;height:31px;background:#ffffff;border:1px solid #a19f9d;border-radius:3px;"></div><div class="r" style="left:1149.6px;top:615.3px;width:21px;height:20.5px;background:#e66c37;border:1px solid #9a9a9a;"></div><svg class="r" style="left:1188px;top:620px;" width="20" height="12" viewBox="0 0 20 12"><path d="M2 2 L9.5 9.5 L17 2" fill="none" stroke="#323130" stroke-width="1.4"/></svg><div class="r" style="left:1218.4px;top:610px;width:31.5px;height:31px;background:#ffffff;border:1px solid #a19f9d;border-radius:3px;"></div><div class="t" style="top:615.92px;font-size:19px;color:#252423;left:1219.00px;width:30px;text-align:center;font-family:'Liberation Serif',serif;font-style:italic;">fx</div><div class="t" style="top:656.60px;font-size:15px;color:#252423;left:1143.5px;">Transparency</div><div class="r" style="left:1143.7px;top:695.4px;width:71px;height:31.4px;background:#ffffff;border:1px solid #a19f9d;border-radius:3px;"></div><div class="t" style="top:705.20px;font-size:15px;color:#605e5c;left:1149px;">0 %</div><svg class="r" style="left:1199px;top:699px;" width="14" height="24" viewBox="0 0 14 24"><path d="M2 8 L7 3 L12 8 M2 16 L7 21 L12 16" fill="none" stroke="#605e5c" stroke-width="1.1"/></svg><div class="r" style="left:1240px;top:708.5px;width:98px;height:4px;background:#e6e4e2;border-radius:2px;"></div><div class="r" style="left:1220px;top:700px;width:21px;height:21px;background:#ffffff;border:2px solid #605e5c;border-radius:50%;"></div><div class="t" style="top:757.35px;font-size:15.3px;color:#252423;left:1143.7px;">Display units</div><div class="r" style="left:1143.7px;top:781.2px;width:263.5px;height:31.1px;background:#ffffff;border:1px solid #a19f9d;border-radius:3px;"></div><div class="t" style="top:789.18px;font-size:15.5px;color:#605e5c;left:1155px;">None</div><svg class="r" style="left:1382px;top:791px;" width="18" height="12" viewBox="0 0 18 12"><path d="M1.5 2 L9 9.5 L16.5 2" fill="none" stroke="#323130" stroke-width="1.4"/></svg><div class="t" style="top:827.66px;font-size:15.4px;color:#252423;left:1143.7px;">Value decimal places</div><div class="r" style="left:1143.7px;top:850.8px;width:91.8px;height:31.1px;background:#ffffff;border:1px solid #a19f9d;border-radius:3px;"></div><div class="t" style="top:859.28px;font-size:15.5px;color:#605e5c;left:1152px;">Auto</div><svg class="r" style="left:1220px;top:854px;" width="14" height="24" viewBox="0 0 14 24"><path d="M2 8 L7 3 L12 8 M2 16 L7 21 L12 16" fill="none" stroke="#605e5c" stroke-width="1.1"/></svg><div class="t" style="top:896.45px;font-size:15.3px;color:#252423;left:1143.7px;">Show blank as</div><div class="r" style="left:1143.7px;top:920.4px;width:263.5px;height:30.8px;background:#ffffff;border:1px solid #a19f9d;border-radius:3px;"></div><div class="t" style="top:927.88px;font-size:15.5px;color:#605e5c;left:1152px;">0</div><div class="r" style="left:1421.4px;top:748.7px;width:7px;height:164px;background:#8a8886;border-radius:4px;"></div><div class="r" style="left:1430px;top:168px;width:241px;height:798px;background:#f3f2f1;border-left:1px solid #dcdad8;"></div><div class="t" style="top:184.65px;font-size:20.5px;color:#252423;font-weight:bold;left:1440px;">Build</div><svg class="r" style="left:1610.5px;top:190.4px;" width="21.8" height="6" viewBox="0 0 21.8 6"><circle cx="3.0" cy="3" r="1.35" fill="#252423"/><circle cx="10.9" cy="3" r="1.35" fill="#252423"/><circle cx="18.8" cy="3" r="1.35" fill="#252423"/></svg><svg class="r" style="left:1642px;top:183.5px;" width="18" height="18" viewBox="0 0 18 18"><path d="M1.5 0.5 L9 8.3 L1.5 16 M8.5 0.5 L16 8.3 L8.5 16" fill="none" stroke="#252423" stroke-width="1.15"/></svg><div class="t" style="top:221.44px;font-size:15.55px;color:#252423;left:1440.8px;">Suggestions</div><div class="r" style="left:1441.2px;top:245.4px;width:218px;height:284px;background:#ffffff;border:1px solid #a19f9d;border-radius:4px;"></div><div class="r" style="left:1447.1px;top:250.3px;width:31.7px;height:31.5px;background:#ffffff;border:1.5px solid #605e5c;"></div><div class="r" style="left:1663px;top:218px;width:7px;height:720px;background:#8a8886;border-radius:4px;"></div><div class="t" style="top:545.05px;font-size:15.3px;color:#252423;left:1441px;">Y-axis</div><div class="r" style="left:1440.4px;top:566px;width:219.2px;height:98.20000000000005px;background:none;border:1px dashed #8a8886;border-radius:2px;"></div><div class="r" style="left:1447.5px;top:574.5px;width:205.3px;height:38.7px;background:linear-gradient(#f3f3f3,#dedede);border:1px solid #8a8886;border-radius:4px;"></div><div class="t" style="top:587.48px;font-size:15.5px;color:#252423;left:1455.7px;">Country</div><svg class="r" style="left:1585px;top:583px;" width="20" height="20" viewBox="0 0 20 20"><path d="M2 2 L17 17 M17 2 L2 17" stroke="#252423" stroke-width="1.4"/></svg><div class="r" style="left:1614px;top:580px;width:1px;height:21px;background:#8a8886;"></div><svg class="r" style="left:1629px;top:584px;" width="14" height="18" viewBox="0 0 14 18"><path d="M3 2 L10 9 L3 16" fill="none" stroke="#252423" stroke-width="1.4"/></svg><div class="r" style="left:1447.5px;top:619.5px;width:205.3px;height:38.5px;background:#ffffff;border:1px solid #8a8886;border-radius:4px;"></div><div class="t" style="top:631.73px;font-size:15.2px;color:#252423;font-weight:bold;left:1450.00px;width:200px;text-align:center;">+Add data</div><div class="t" style="top:679.55px;font-size:15.3px;color:#252423;left:1440.5px;">X-axis</div><div class="r" style="left:1440.4px;top:702.9px;width:219.2px;height:96.5px;background:none;border:1px dashed #8a8886;border-radius:2px;"></div><div class="r" style="left:1447.5px;top:709.4px;width:205.3px;height:38.30000000000007px;background:#faf9f8;border:1px solid #8a8886;border-radius:4px;"></div><div class="t" style="top:722.58px;font-size:15.5px;color:#252423;left:1455.7px;">Sum of GDP (B...</div><svg class="r" style="left:1585px;top:721.4px;" width="20" height="20" viewBox="0 0 20 20"><path d="M2 2 L17 17 M17 2 L2 17" stroke="#252423" stroke-width="1.4"/></svg><div class="r" style="left:1614px;top:718.4px;width:1px;height:21px;background:#8a8886;"></div><svg class="r" style="left:1629px;top:721.4px;" width="14" height="18" viewBox="0 0 14 18"><path d="M3 2 L10 9 L3 16" fill="none" stroke="#252423" stroke-width="1.4"/></svg><div class="r" style="left:1447.5px;top:754.6px;width:205.3px;height:38.299999999999955px;background:#ffffff;border:1px solid #8a8886;border-radius:4px;"></div><div class="t" style="top:767.13px;font-size:15.2px;color:#252423;font-weight:bold;left:1450.00px;width:200px;text-align:center;">+Add data</div><div class="t" style="top:815.05px;font-size:15.3px;color:#252423;left:1441px;">Legend</div><div class="r" style="left:1440.4px;top:837.7px;width:219.2px;height:51.39999999999998px;background:none;border:1px dashed #8a8886;border-radius:2px;"></div><div class="r" style="left:1447.5px;top:844.3px;width:205.3px;height:38.0px;background:#ffffff;border:1px solid #8a8886;border-radius:4px;"></div><div class="t" style="top:855.73px;font-size:15.2px;color:#252423;font-weight:bold;left:1450.00px;width:200px;text-align:center;">+Add data</div><div class="t" style="top:903.65px;font-size:15.3px;color:#252423;left:1441px;">Small multiples</div><div class="r" style="left:1440.4px;top:927px;width:219.2px;height:63px;background:none;border:1px dashed #8a8886;border-radius:2px;"></div><div class="r" style="left:1447.5px;top:933.7px;width:205.3px;height:46.299999999999955px;background:#ffffff;border:1px solid #8a8886;border-radius:4px;"></div><div class="t" style="top:945.73px;font-size:15.2px;color:#252423;font-weight:bold;left:1450.00px;width:200px;text-align:center;">+Add data</div><div class="r" style="left:1671px;top:168px;width:246px;height:798px;background:#f3f2f1;border-left:1px solid #dcdad8;"></div><div class="t" style="top:184.65px;font-size:20.5px;color:#252423;font-weight:bold;left:1682px;">Data</div><svg class="r" style="left:1852.8px;top:190.4px;" width="21.8" height="6" viewBox="0 0 21.8 6"><circle cx="3.0" cy="3" r="1.35" fill="#252423"/><circle cx="10.9" cy="3" r="1.35" fill="#252423"/><circle cx="18.8" cy="3" r="1.35" fill="#252423"/></svg><svg class="r" style="left:1884px;top:183.5px;" width="18" height="18" viewBox="0 0 18 18"><path d="M1.5 0.5 L9 8.3 L1.5 16 M8.5 0.5 L16 8.3 L8.5 16" fill="none" stroke="#252423" stroke-width="1.15"/></svg><div class="r" style="left:1678px;top:229.6px;width:228px;height:30px;background:#ffffff;border:1px solid #d1d1d1;border-bottom:1px solid #8a8886;border-radius:4px;"></div><svg class="r" style="left:1684px;top:236px;" width="22" height="22" viewBox="0 0 22 22"><circle cx="8.5" cy="8.5" r="6.8" fill="none" stroke="#323130" stroke-width="1.4"/><path d="M13.5 13.5 L19 19" stroke="#323130" stroke-width="1.4"/></svg><div class="t" style="top:239.69px;font-size:17.5px;color:#605e5c;left:1721px;">Search</div><div class="r" style="left:1896px;top:271.8px;width:10.6px;height:112px;background:#8a8886;border-radius:1px;"></div><div class="r" style="left:1911px;top:168px;width:6px;height:798px;background:#e8e8e8;border-left:1px solid #c8c6c4;"></div><div class="r" style="left:1912px;top:210px;width:5px;height:1px;background:#8a8886;"></div><div class="r" style="left:1912px;top:253px;width:5px;height:1px;background:#8a8886;"></div><svg class="r" style="left:1691.5px;top:282.2px;" width="10" height="16" viewBox="0 0 10 16"><path d="M1.5 1 L8.5 8 L1.5 15" fill="none" stroke="#323130" stroke-width="1.3"/></svg><svg class="r" style="left:1710.5px;top:280.2px;" width="17" height="17" viewBox="0 0 17 17"><rect x="1" y="1" width="15" height="15" rx="3" fill="none" stroke="#252423" stroke-width="1.5"/><path d="M1 5 H16 M1 12 H16 M5 1 V16 M12 1 V16" stroke="#252423" stroke-width="1.3"/></svg><div class="t" style="top:283.25px;font-size:15.3px;color:#252423;left:1735.2px;">Ashishdata</div><svg class="r" style="left:1691.5px;top:314.25px;" width="10" height="16" viewBox="0 0 10 16"><path d="M1.5 1 L8.5 8 L1.5 15" fill="none" stroke="#323130" stroke-width="1.3"/></svg><svg class="r" style="left:1710.5px;top:312.25px;" width="17" height="17" viewBox="0 0 17 17"><rect x="1" y="1" width="15" height="15" rx="3" fill="none" stroke="#252423" stroke-width="1.5"/><path d="M1 5 H16 M1 12 H16 M5 1 V16 M12 1 V16" stroke="#252423" stroke-width="1.3"/></svg><div class="t" style="top:315.30px;font-size:15.3px;color:#252423;left:1735.2px;">Branch details</div><svg class="r" style="left:1691.5px;top:346.29999999999995px;" width="10" height="16" viewBox="0 0 10 16"><path d="M1.5 1 L8.5 8 L1.5 15" fill="none" stroke="#323130" stroke-width="1.3"/></svg><svg class="r" style="left:1710.5px;top:344.29999999999995px;" width="19" height="19" viewBox="0 0 19 19"><path d="M9 15 H4 C2 15 1 14 1 12 V4 C1 2 2 1 4 1 H12 C14 1 15 2 15 4 V6" fill="none" stroke="#252423" stroke-width="1.4"/><path d="M1 6 H9 M1 11 H8 M6 1 V15" stroke="#252423" stroke-width="1.3"/><rect x="9.5" y="7.5" width="8" height="11" rx="1" fill="#f3f2f1" stroke="#252423" stroke-width="1.3"/><path d="M9.5 11 H17.5 M9.5 14.5 H17.5 M13.5 11 V18.5" stroke="#252423" stroke-width="1.1"/></svg><div class="t" style="top:347.35px;font-size:15.3px;color:#252423;left:1735.2px;">Calculated Table</div><svg class="r" style="left:1691.5px;top:378.34999999999997px;" width="10" height="16" viewBox="0 0 10 16"><path d="M1.5 1 L8.5 8 L1.5 15" fill="none" stroke="#323130" stroke-width="1.3"/></svg><svg class="r" style="left:1710.5px;top:376.34999999999997px;" width="19" height="19" viewBox="0 0 19 19"><path d="M9 15 H4 C2 15 1 14 1 12 V4 C1 2 2 1 4 1 H12 C14 1 15 2 15 4 V6" fill="none" stroke="#252423" stroke-width="1.4"/><path d="M1 6 H9 M1 11 H8 M6 1 V15" stroke="#252423" stroke-width="1.3"/><rect x="9.5" y="7.5" width="8" height="11" rx="1" fill="#f3f2f1" stroke="#252423" stroke-width="1.3"/><path d="M9.5 11 H17.5 M9.5 14.5 H17.5 M13.5 11 V18.5" stroke="#252423" stroke-width="1.1"/></svg><div class="t" style="top:379.40px;font-size:15.3px;color:#252423;left:1735.2px;">Class</div><svg class="r" style="left:1688px;top:412.4px;" width="17" height="10" viewBox="0 0 17 10"><path d="M1 1 L8.5 8.5 L16 1" fill="none" stroke="#323130" stroke-width="1.3"/></svg><svg class="r" style="left:1710.5px;top:408.4px;" width="17" height="17" viewBox="0 0 17 17"><rect x="1" y="1" width="15" height="15" rx="3" fill="none" stroke="#252423" stroke-width="1.5"/><path d="M1 5 H16 M1 12 H16 M5 1 V16 M12 1 V16" stroke="#252423" stroke-width="1.3"/></svg><svg class="r" style="left:1719px;top:415.4px;" width="15" height="15" viewBox="0 0 15 15"><circle cx="7.5" cy="7.5" r="7.2" fill="#117865"/><path d="M4.3 7.8 L6.6 10 L10.8 5.6" fill="none" stroke="#fff" stroke-width="1.4"/></svg><div class="t" style="top:411.45px;font-size:15.3px;color:#252423;left:1735.2px;">Countries</div><svg class="r" style="left:1730.5px;top:442.45px;" width="16" height="16" viewBox="0 0 16 16"><rect x="0.75" y="0.75" width="14.5" height="14.5" rx="2.5" fill="#fff" stroke="#8a8886" stroke-width="1.2"/></svg><svg class="r" style="left:1758.5px;top:441.95px;" width="14" height="17" viewBox="0 0 14 17"><path d="M13 2 H1.5 L7.5 8.5 L1.5 15 H13" fill="none" stroke="#252423" stroke-width="1.5"/></svg><div class="t" style="top:443.50px;font-size:15.3px;color:#252423;left:1781.8px;">Area (sq km)</div><svg class="r" style="left:1730.5px;top:474.5px;" width="16" height="16" viewBox="0 0 16 16"><rect x="0.5" y="0.5" width="15" height="15" rx="2.5" fill="#117865" stroke="#117865"/><path d="M3.5 8 L6.5 11 L12.5 5" fill="none" stroke="#fff" stroke-width="1.5"/></svg><div class="t" style="top:475.55px;font-size:15.3px;color:#252423;left:1781.8px;">Country</div><svg class="r" style="left:1730.5px;top:506.54999999999995px;" width="16" height="16" viewBox="0 0 16 16"><rect x="0.5" y="0.5" width="15" height="15" rx="2.5" fill="#117865" stroke="#117865"/><path d="M3.5 8 L6.5 11 L12.5 5" fill="none" stroke="#fff" stroke-width="1.5"/></svg><svg class="r" style="left:1758.5px;top:506.04999999999995px;" width="14" height="17" viewBox="0 0 14 17"><path d="M13 2 H1.5 L7.5 8.5 L1.5 15 H13" fill="none" stroke="#252423" stroke-width="1.5"/></svg><div class="t" style="top:507.60px;font-size:15.3px;color:#252423;left:1781.8px;">GDP (Billion U...</div><svg class="r" style="left:1730.5px;top:538.5999999999999px;" width="16" height="16" viewBox="0 0 16 16"><rect x="0.75" y="0.75" width="14.5" height="14.5" rx="2.5" fill="#fff" stroke="#8a8886" stroke-width="1.2"/></svg><svg class="r" style="left:1758.5px;top:538.0999999999999px;" width="14" height="17" viewBox="0 0 14 17"><path d="M13 2 H1.5 L7.5 8.5 L1.5 15 H13" fill="none" stroke="#252423" stroke-width="1.5"/></svg><div class="t" style="top:539.65px;font-size:15.3px;color:#252423;left:1781.8px;">Literacy Rate (...</div><div class="r" style="left:1678.3px;top:562.35px;width:216.3px;height:31.6px;background:#e8e7e6;border-radius:5px;"></div><div class="r" style="left:1678.3px;top:562.35px;width:5.2px;height:31.6px;background:#c8c6c4;border-radius:5px 0 0 5px;"></div><svg class="r" style="left:1874px;top:576.65px;" width="19.0" height="6" viewBox="0 0 19.0 6"><circle cx="3.0" cy="3" r="1.2" fill="#605e5c"/><circle cx="9.5" cy="3" r="1.2" fill="#605e5c"/><circle cx="16.0" cy="3" r="1.2" fill="#605e5c"/></svg><svg class="r" style="left:1730.5px;top:570.65px;" width="16" height="16" viewBox="0 0 16 16"><rect x="0.75" y="0.75" width="14.5" height="14.5" rx="2.5" fill="#fff" stroke="#8a8886" stroke-width="1.2"/></svg><svg class="r" style="left:1758.5px;top:570.15px;" width="14" height="17" viewBox="0 0 14 17"><path d="M13 2 H1.5 L7.5 8.5 L1.5 15 H13" fill="none" stroke="#252423" stroke-width="1.5"/></svg><div class="r" style="left:1777.7px;top:566.4px;width:76.6px;height:19.7px;background:#f0e800;"></div><div class="t" style="top:571.70px;font-size:15.3px;color:#252423;left:1781.8px;">Population...</div><svg class="r" style="left:1730.5px;top:602.7px;" width="16" height="16" viewBox="0 0 16 16"><rect x="0.75" y="0.75" width="14.5" height="14.5" rx="2.5" fill="#fff" stroke="#8a8886" stroke-width="1.2"/></svg><svg class="r" style="left:1758.5px;top:602.2px;" width="14" height="17" viewBox="0 0 14 17"><path d="M13 2 H1.5 L7.5 8.5 L1.5 15 H13" fill="none" stroke="#252423" stroke-width="1.5"/></svg><div class="t" style="top:603.75px;font-size:15.3px;color:#252423;left:1781.8px;">Year</div><svg class="r" style="left:1691.5px;top:634.75px;" width="10" height="16" viewBox="0 0 10 16"><path d="M1.5 1 L8.5 8 L1.5 15" fill="none" stroke="#323130" stroke-width="1.3"/></svg><svg class="r" style="left:1710.5px;top:632.75px;" width="19" height="19" viewBox="0 0 19 19"><path d="M9 15 H4 C2 15 1 14 1 12 V4 C1 2 2 1 4 1 H12 C14 1 15 2 15 4 V6" fill="none" stroke="#252423" stroke-width="1.4"/><path d="M1 6 H9 M1 11 H8 M6 1 V15" stroke="#252423" stroke-width="1.3"/><rect x="9.5" y="7.5" width="8" height="11" rx="1" fill="#f3f2f1" stroke="#252423" stroke-width="1.3"/><path d="M9.5 11 H17.5 M9.5 14.5 H17.5 M13.5 11 V18.5" stroke="#252423" stroke-width="1.1"/></svg><div class="t" style="top:635.80px;font-size:15.3px;color:#252423;left:1735.2px;">Countries Average T...</div><svg class="r" style="left:1691.5px;top:666.8px;" width="10" height="16" viewBox="0 0 10 16"><path d="M1.5 1 L8.5 8 L1.5 15" fill="none" stroke="#323130" stroke-width="1.3"/></svg><svg class="r" style="left:1710.5px;top:664.8px;" width="17" height="17" viewBox="0 0 17 17"><rect x="1" y="1" width="15" height="15" rx="3" fill="none" stroke="#252423" stroke-width="1.5"/><path d="M1 5 H16 M1 12 H16 M5 1 V16 M12 1 V16" stroke="#252423" stroke-width="1.3"/></svg><div class="t" style="top:667.85px;font-size:15.3px;color:#252423;left:1735.2px;">Countrylist</div><svg class="r" style="left:1691.5px;top:698.8499999999999px;" width="10" height="16" viewBox="0 0 10 16"><path d="M1.5 1 L8.5 8 L1.5 15" fill="none" stroke="#323130" stroke-width="1.3"/></svg><svg class="r" style="left:1710.5px;top:696.8499999999999px;" width="17" height="17" viewBox="0 0 17 17"><rect x="1" y="1" width="15" height="15" rx="3" fill="none" stroke="#252423" stroke-width="1.5"/><path d="M1 5 H16 M1 12 H16 M5 1 V16 M12 1 V16" stroke="#252423" stroke-width="1.3"/></svg><div class="t" style="top:699.90px;font-size:15.3px;color:#252423;left:1735.2px;">Customers</div><svg class="r" style="left:1691.5px;top:730.8999999999999px;" width="10" height="16" viewBox="0 0 10 16"><path d="M1.5 1 L8.5 8 L1.5 15" fill="none" stroke="#323130" stroke-width="1.3"/></svg><svg class="r" style="left:1710.5px;top:728.8999999999999px;" width="17" height="17" viewBox="0 0 17 17"><rect x="1" y="1" width="15" height="15" rx="3" fill="none" stroke="#252423" stroke-width="1.5"/><path d="M1 5 H16 M1 12 H16 M5 1 V16 M12 1 V16" stroke="#252423" stroke-width="1.3"/></svg><div class="t" style="top:731.95px;font-size:15.3px;color:#252423;left:1735.2px;">CustomersData</div><svg class="r" style="left:1691.5px;top:762.9499999999999px;" width="10" height="16" viewBox="0 0 10 16"><path d="M1.5 1 L8.5 8 L1.5 15" fill="none" stroke="#323130" stroke-width="1.3"/></svg><svg class="r" style="left:1710.5px;top:760.9499999999999px;" width="17" height="17" viewBox="0 0 17 17"><rect x="1" y="1" width="15" height="15" rx="3" fill="none" stroke="#252423" stroke-width="1.5"/><path d="M1 5 H16 M1 12 H16 M5 1 V16 M12 1 V16" stroke="#252423" stroke-width="1.3"/></svg><div class="t" style="top:764.00px;font-size:15.3px;color:#252423;left:1735.2px;">Data1</div><svg class="r" style="left:1691.5px;top:795.0px;" width="10" height="16" viewBox="0 0 10 16"><path d="M1.5 1 L8.5 8 L1.5 15" fill="none" stroke="#323130" stroke-width="1.3"/></svg><svg class="r" style="left:1710.5px;top:793.0px;" width="17" height="17" viewBox="0 0 17 17"><rect x="1" y="1" width="15" height="15" rx="3" fill="none" stroke="#252423" stroke-width="1.5"/><path d="M1 5 H16 M1 12 H16 M5 1 V16 M12 1 V16" stroke="#252423" stroke-width="1.3"/></svg><div class="t" style="top:796.05px;font-size:15.3px;color:#252423;left:1735.2px;">Data2</div><svg class="r" style="left:1691.5px;top:827.05px;" width="10" height="16" viewBox="0 0 10 16"><path d="M1.5 1 L8.5 8 L1.5 15" fill="none" stroke="#323130" stroke-width="1.3"/></svg><svg class="r" style="left:1710.5px;top:825.05px;" width="19" height="19" viewBox="0 0 19 19"><path d="M9 15 H4 C2 15 1 14 1 12 V4 C1 2 2 1 4 1 H12 C14 1 15 2 15 4 V6" fill="none" stroke="#252423" stroke-width="1.4"/><path d="M1 6 H9 M1 11 H8 M6 1 V15" stroke="#252423" stroke-width="1.3"/><rect x="9.5" y="7.5" width="8" height="11" rx="1" fill="#f3f2f1" stroke="#252423" stroke-width="1.3"/><path d="M9.5 11 H17.5 M9.5 14.5 H17.5 M13.5 11 V18.5" stroke="#252423" stroke-width="1.1"/></svg><div class="t" style="top:828.10px;font-size:15.3px;color:#252423;left:1735.2px;">DATESBETWEEN Table</div><svg class="r" style="left:1691.5px;top:859.0999999999999px;" width="10" height="16" viewBox="0 0 10 16"><path d="M1.5 1 L8.5 8 L1.5 15" fill="none" stroke="#323130" stroke-width="1.3"/></svg><svg class="r" style="left:1710.5px;top:857.0999999999999px;" width="19" height="19" viewBox="0 0 19 19"><path d="M9 15 H4 C2 15 1 14 1 12 V4 C1 2 2 1 4 1 H12 C14 1 15 2 15 4 V6" fill="none" stroke="#252423" stroke-width="1.4"/><path d="M1 6 H9 M1 11 H8 M6 1 V15" stroke="#252423" stroke-width="1.3"/><rect x="9.5" y="7.5" width="8" height="11" rx="1" fill="#f3f2f1" stroke="#252423" stroke-width="1.3"/><path d="M9.5 11 H17.5 M9.5 14.5 H17.5 M13.5 11 V18.5" stroke="#252423" stroke-width="1.1"/></svg><div class="t" style="top:860.15px;font-size:15.3px;color:#252423;left:1735.2px;">DATESINPERIOD Table</div><svg class="r" style="left:1691.5px;top:891.1499999999999px;" width="10" height="16" viewBox="0 0 10 16"><path d="M1.5 1 L8.5 8 L1.5 15" fill="none" stroke="#323130" stroke-width="1.3"/></svg><svg class="r" style="left:1710.5px;top:889.1499999999999px;" width="19" height="19" viewBox="0 0 19 19"><path d="M9 15 H4 C2 15 1 14 1 12 V4 C1 2 2 1 4 1 H12 C14 1 15 2 15 4 V6" fill="none" stroke="#252423" stroke-width="1.4"/><path d="M1 6 H9 M1 11 H8 M6 1 V15" stroke="#252423" stroke-width="1.3"/><rect x="9.5" y="7.5" width="8" height="11" rx="1" fill="#f3f2f1" stroke="#252423" stroke-width="1.3"/><path d="M9.5 11 H17.5 M9.5 14.5 H17.5 M13.5 11 V18.5" stroke="#252423" stroke-width="1.1"/></svg><div class="t" style="top:892.20px;font-size:15.3px;color:#252423;left:1735.2px;">DATESMTD Table</div><svg class="r" style="left:1691.5px;top:923.2px;" width="10" height="16" viewBox="0 0 10 16"><path d="M1.5 1 L8.5 8 L1.5 15" fill="none" stroke="#323130" stroke-width="1.3"/></svg><svg class="r" style="left:1710.5px;top:921.2px;" width="17" height="17" viewBox="0 0 17 17"><rect x="1" y="1" width="15" height="15" rx="3" fill="none" stroke="#252423" stroke-width="1.5"/><path d="M1 5 H16 M1 12 H16 M5 1 V16 M12 1 V16" stroke="#252423" stroke-width="1.3"/></svg><div class="t" style="top:924.25px;font-size:15.3px;color:#252423;left:1735.2px;">df</div><svg class="r" style="left:1691.5px;top:955.25px;" width="10" height="16" viewBox="0 0 10 16"><path d="M1.5 1 L8.5 8 L1.5 15" fill="none" stroke="#323130" stroke-width="1.3"/></svg><svg class="r" style="left:1710.5px;top:953.25px;" width="19" height="19" viewBox="0 0 19 19"><path d="M9 15 H4 C2 15 1 14 1 12 V4 C1 2 2 1 4 1 H12 C14 1 15 2 15 4 V6" fill="none" stroke="#252423" stroke-width="1.4"/><path d="M1 6 H9 M1 11 H8 M6 1 V15" stroke="#252423" stroke-width="1.3"/><rect x="9.5" y="7.5" width="8" height="11" rx="1" fill="#f3f2f1" stroke="#252423" stroke-width="1.3"/><path d="M9.5 11 H17.5 M9.5 14.5 H17.5 M13.5 11 V18.5" stroke="#252423" stroke-width="1.1"/></svg><div class="t" style="top:956.30px;font-size:15.3px;color:#252423;left:1735.2px;">DISTINCT Values Table</div><div class="r" style="left:1345px;top:555px;width:319px;height:44.5px;background:#fff;border-radius:4px;box-shadow:0 3px 12px rgba(0,0,0,.2), 0 0 2px rgba(0,0,0,.12);"></div><svg class="r" style="left:1663px;top:567px;" width="11" height="21" viewBox="0 0 11 21"><path d="M0 0 L10.5 10.5 L0 21 Z" fill="#fff"/></svg><div class="t" style="top:570.38px;font-size:15.5px;color:#252423;left:1356px;">Name</div><div class="t" style="top:570.29px;font-size:15.6px;color:#252423;font-weight:bold;letter-spacing:-0.12px;left:1414.5px;">'Countries'[Population (Millions)]</div><svg class="r" style="left:1451.2px;top:253.3px" width="26.0" height="26.0" viewBox="0 0 26 26"><path d="M1 0 V24 H25" fill="none" stroke="#323130" stroke-width="1.4"/><rect x="1.5" y="3" width="6" height="6" fill="#fafafa" stroke="#6e6e6e" stroke-width="1.1"/><rect x="7.5" y="3" width="9" height="6" fill="#8cc2ef" stroke="#1a6fc4" stroke-width="1.1"/><rect x="1.5" y="14.3" width="9" height="5.6" fill="#fafafa" stroke="#6e6e6e" stroke-width="1.1"/><rect x="10.5" y="14.3" width="11.5" height="5.6" fill="#c8c6c4" stroke="#6e6e6e" stroke-width="1.1"/></svg><svg class="r" style="left:1485.9px;top:253.3px" width="26.0" height="26.0" viewBox="0 0 26 26"><path d="M1 0 V24 H25" fill="none" stroke="#323130" stroke-width="1.4"/><rect x="4.2" y="16" width="6.5" height="7.7" fill="#fafafa" stroke="#6e6e6e" stroke-width="1.1"/><rect x="4.2" y="7" width="6.5" height="9" fill="#8cc2ef" stroke="#1a6fc4" stroke-width="1.1"/><rect x="15.2" y="14.7" width="5.8" height="9" fill="#fafafa" stroke="#6e6e6e" stroke-width="1.1"/><rect x="15.2" y="3.1" width="5.8" height="11.6" fill="#c8c6c4" stroke="#6e6e6e" stroke-width="1.1"/></svg><svg class="r" style="left:1520.6000000000001px;top:253.3px" width="26.0" height="26.0" viewBox="0 0 26 26"><rect x="1" y="1.2" width="22.2" height="4.9" fill="#8cc2ef" stroke="#1a6fc4" stroke-width="1.1"/><rect x="1" y="6.1" width="13.2" height="4.9" fill="#fafafa" stroke="#6e6e6e" stroke-width="1.1"/><rect x="1" y="11" width="9.9" height="5.5" fill="#c8c6c4" stroke="#6e6e6e" stroke-width="1.1"/><rect x="1" y="16.5" width="17.2" height="5" fill="#fafafa" stroke="#6e6e6e" stroke-width="1.1"/><path d="M1 0 V24 H25" fill="none" stroke="#555" stroke-width="1.3"/></svg><svg class="r" style="left:1555.3px;top:253.3px" width="26.0" height="26.0" viewBox="0 0 26 26"><path d="M1 0 V24 H25" fill="none" stroke="#323130" stroke-width="1.4"/><rect x="2.3" y="1.2" width="5.1" height="22.5" fill="#8cc2ef" stroke="#1a6fc4" stroke-width="1.1"/><rect x="7.4" y="10.2" width="4.8" height="13.5" fill="#fafafa" stroke="#6e6e6e" stroke-width="1.1"/><rect x="12.2" y="13.7" width="4.8" height="10" fill="#c8c6c4" stroke="#6e6e6e" stroke-width="1.1"/><rect x="17" y="7.3" width="5" height="16.4" fill="#fafafa" stroke="#6e6e6e" stroke-width="1.1"/></svg><svg class="r" style="left:1590.0px;top:253.3px" width="26.0" height="26.0" viewBox="0 0 26 26"><path d="M1 0 V24 H25" fill="none" stroke="#323130" stroke-width="1.4"/><rect x="1.5" y="3" width="6" height="6" fill="#fafafa" stroke="#6e6e6e" stroke-width="1.1"/><rect x="7.5" y="3" width="14" height="6" fill="#8cc2ef" stroke="#1a6fc4" stroke-width="1.1"/><rect x="1.5" y="14.3" width="13" height="5.6" fill="#fafafa" stroke="#6e6e6e" stroke-width="1.1"/><rect x="14.5" y="14.3" width="7" height="5.6" fill="#c8c6c4" stroke="#6e6e6e" stroke-width="1.1"/></svg><svg class="r" style="left:1624.7px;top:253.3px" width="26.0" height="26.0" viewBox="0 0 26 26"><path d="M1 0 V24 H25" fill="none" stroke="#323130" stroke-width="1.4"/><rect x="4.5" y="17" width="6" height="6.7" fill="#fafafa" stroke="#6e6e6e" stroke-width="1.1"/><rect x="4.5" y="3" width="6" height="14" fill="#8cc2ef" stroke="#1a6fc4" stroke-width="1.1"/><rect x="15" y="8" width="6" height="15.7" fill="#fafafa" stroke="#6e6e6e" stroke-width="1.1"/><rect x="15" y="3" width="6" height="5" fill="#c8c6c4" stroke="#6e6e6e" stroke-width="1.1"/></svg><svg class="r" style="left:1451.2px;top:288.05px" width="26.0" height="26.0" viewBox="0 0 26 26"><path d="M1 0 V24 H25" fill="none" stroke="#323130" stroke-width="1.4"/><path d="M1 14.3 L8.9 5.3 L15.1 13.1 L23.5 4.7" fill="none" stroke="#323130" stroke-width="1.4"/><path d="M1 18.7 L15.1 4.7 L23.5 13.1" fill="none" stroke="#1a6fc4" stroke-width="1.4"/></svg><svg class="r" style="left:1485.9px;top:288.05px" width="26.0" height="26.0" viewBox="0 0 26 26"><path d="M0.2 14.8 L7.5 1.9 L14.3 9.8" fill="#fafafa" stroke="#323130" stroke-width="1.3"/><path d="M14.3 9.8 L18.7 0.8 L23.8 11.5 V23.8 Z" fill="#c8c6c4" stroke="#6e6e6e" stroke-width="1.1"/><path d="M0.5 15 L6.5 21 L14.3 10.3 L23.8 23.8 H0.5 Z" fill="#8cc2ef" stroke="#1a6fc4" stroke-width="1.4"/></svg><svg class="r" style="left:1520.6000000000001px;top:288.05px" width="26.0" height="26.0" viewBox="0 0 26 26"><path d="M1 0 V24 H25" fill="none" stroke="#323130" stroke-width="1.4"/><path d="M0.8 8.4 L8.6 12.9 L17 5 L20.4 9 H24.3 V19.6 L17 13.5 L8.6 22.4 L0.8 15.1 Z" fill="#8cc2ef" stroke="#1a6fc4" stroke-width="1.4"/></svg><svg class="r" style="left:1555.3px;top:288.05px" width="26.0" height="26.0" viewBox="0 0 26 26"><path d="M1 0 V24 H25" fill="none" stroke="#323130" stroke-width="1.4"/><path d="M1 5 H24.5 V21.9 L16.7 13.5 L7.7 22.4 L1 14.4 Z" fill="#8cc2ef" stroke="#1a6fc4" stroke-width="1.4"/></svg><svg class="r" style="left:1590.0px;top:288.05px" width="26.0" height="26.0" viewBox="0 0 26 26"><path d="M1 0 V24 H25" fill="none" stroke="#323130" stroke-width="1.4"/><rect x="4.4" y="20.2" width="6.2" height="3.5" fill="#fafafa" stroke="#6e6e6e" stroke-width="1.1"/><rect x="4.4" y="5" width="6.2" height="15.2" fill="#8cc2ef" stroke="#1a6fc4" stroke-width="1.1"/><rect x="15" y="12.3" width="6" height="11.4" fill="#fafafa" stroke="#6e6e6e" stroke-width="1.1"/><rect x="15" y="5" width="6" height="7.3" fill="#c8c6c4" stroke="#6e6e6e" stroke-width="1.1"/><path d="M0.3 23.8 L9.3 13.1 L15.5 18.7 L23.3 10.8" fill="none" stroke="#323130" stroke-width="1.4"/></svg><svg class="r" style="left:1624.7px;top:288.05px" width="26.0" height="26.0" viewBox="0 0 26 26"><path d="M1 0 V24 H25" fill="none" stroke="#323130" stroke-width="1.4"/><rect x="4.1" y="11.6" width="6.2" height="12.1" fill="#8cc2ef" stroke="#1a6fc4" stroke-width="1.1"/><rect x="10.3" y="2.6" width="6.2" height="21.1" fill="#fafafa" stroke="#323130" stroke-width="1.1"/><rect x="16.5" y="7.7" width="6" height="16" fill="#c8c6c4" stroke="#6e6e6e" stroke-width="1.1"/><path d="M0.5 23.8 L9.5 12.6 L15.1 18.2 L23 10.8" fill="none" stroke="#323130" stroke-width="1.4"/></svg><svg class="r" style="left:1451.2px;top:322.8px" width="26.0" height="26.0" viewBox="0 0 26 26"><path d="M1 0 V24 H25" fill="none" stroke="#323130" stroke-width="1.4"/><rect x="3.3" y="12" width="6" height="7" fill="#e8831f"/><rect x="17" y="12" width="6" height="7" fill="#e8831f"/><rect x="9.5" y="12.5" width="7.5" height="3.5" fill="#e8831f"/><path d="M3.3 4.2 L12.9 8.1 L23 3.1 V6.4 L12.9 11.5 L3.3 7 Z" fill="#c8c6c4" stroke="#6e6e6e" stroke-width="1"/><path d="M3.3 10.4 L12.9 17.7 L23 9.8 V13.7 L12.9 20.5 L3.3 13.2 Z" fill="#8cc2ef" stroke="#1a6fc4" stroke-width="1.3"/></svg><svg class="r" style="left:1485.9px;top:322.8px" width="26.0" height="26.0" viewBox="0 0 26 26"><path d="M1 0 V24 H25" fill="none" stroke="#323130" stroke-width="1.4"/><rect x="2.8" y="6.4" width="5.7" height="17.3" fill="#fafafa" stroke="#6e6e6e" stroke-width="1.1"/><path d="M8.5 14.3 V6.4 H14.1 V14.3 Z" fill="#c8c6c4" stroke="#6e6e6e" stroke-width="1.1"/><rect x="14.1" y="1.9" width="3.3" height="12.4" fill="#8cc2ef" stroke="#1a6fc4" stroke-width="1.1"/><rect x="17.4" y="1.9" width="5.1" height="21.8" fill="#fafafa" stroke="#6e6e6e" stroke-width="1.1"/></svg><svg class="r" style="left:1520.6000000000001px;top:322.8px" width="26.0" height="26.0" viewBox="0 0 26 26"><rect x="0.7" y="1.4" width="23.6" height="8.4" fill="#8cc2ef" stroke="#1a6fc4" stroke-width="1.4"/><rect x="2.9" y="9.8" width="18.5" height="6.2" fill="#8cc2ef" stroke="#1a6fc4" stroke-width="1.4"/><rect x="6.8" y="16" width="10.7" height="6.7" fill="#8cc2ef" stroke="#1a6fc4" stroke-width="1.4"/></svg><svg class="r" style="left:1555.3px;top:322.8px" width="26.0" height="26.0" viewBox="0 0 26 26"><path d="M1 0 V24 H25" fill="none" stroke="#323130" stroke-width="1.4"/><rect x="17" y="2" width="4.5" height="4" fill="#323130"/><rect x="4.1" y="16.5" width="3.9" height="4" fill="#323130"/><rect x="4.1" y="5.9" width="3.9" height="3.9" fill="#8cc2ef" stroke="#1a6fc4" stroke-width=".5"/><rect x="10.3" y="9.8" width="3.9" height="3.9" fill="#8cc2ef" stroke="#1a6fc4" stroke-width=".5"/><rect x="17" y="14.9" width="4.5" height="3.9" fill="#8cc2ef" stroke="#1a6fc4" stroke-width=".5"/></svg><svg class="r" style="left:1590.0px;top:322.8px" width="26.0" height="26.0" viewBox="0 0 26 26"><circle cx="12" cy="12" r="11.5" fill="#fafafa" stroke="#323130" stroke-width="1.4"/><path d="M12 12 V0.5 A11.5 11.5 0 0 1 19.8 20.5 Z" fill="#8cc2ef" stroke="#1a6fc4" stroke-width="1.4" stroke-linejoin="round"/></svg><svg class="r" style="left:1624.7px;top:322.8px" width="26.0" height="26.0" viewBox="0 0 26 26"><circle cx="12" cy="12" r="8.5" fill="none" stroke="#8cc2ef" stroke-width="6"/><path d="M0.5 12 A11.5 11.5 0 0 1 12 0.5 M3.5 12 A8.5 8.5 0 0 1 12 3.5" fill="none" stroke="#6e6e6e" stroke-width="1.1"/><path d="M0.5 12 A11.5 11.5 0 0 1 12 0.5 L12 6 A6 6 0 0 0 6 12 Z" fill="#fafafa"/><path d="M12 0.5 A11.5 11.5 0 1 1 0.5 12 M12 6 A6 6 0 1 1 6 12" fill="none" stroke="#1a6fc4" stroke-width="1.4"/><path d="M0.5 12 H6 M12 0.5 V6" stroke="#1a6fc4" stroke-width="1.2"/></svg><svg class="r" style="left:1451.2px;top:357.55px" width="26.0" height="26.0" viewBox="0 0 26 26"><rect x="0.5" y="0.5" width="24" height="24" fill="#fafafa" stroke="#323130" stroke-width="1.4"/><rect x="0.5" y="0.5" width="11.8" height="12.5" fill="#8cc2ef" stroke="#1a6fc4" stroke-width="1.3"/><rect x="0.5" y="13" width="11.8" height="11.5" fill="#8cc2ef" stroke="#1a6fc4" stroke-width="1.3"/><path d="M12.3 6.5 H24.5 M16.5 6.5 V24.5 M16.5 15 H24.5" stroke="#6e6e6e" stroke-width="1.2"/></svg><svg class="r" style="left:1485.9px;top:357.55px" width="26.0" height="26.0" viewBox="0 0 26 26"><circle cx="13.5" cy="12.6" r="7.6" fill="#fff" stroke="#323130" stroke-width="1.3"/><path d="M9 9 C11 7 14 8 13 11 C12 13 10 12 9 14 C8 12 8 10 9 9Z M15 13 C17 12 19 13 19 15 C18 18 16 19 15 17 Z M14 6 C16 5 18 6 18 8 L16 9Z" fill="#2e9e48"/><path d="M8 1.5 C1 5 1 19 10 22 C14 23 18 22 20.5 19.5" fill="none" stroke="#323130" stroke-width="1.3"/><path d="M12 22.5 V24.3 M4 24.5 H21" stroke="#323130" stroke-width="1.3"/></svg><svg class="r" style="left:1520.6000000000001px;top:357.55px" width="26.0" height="26.0" viewBox="0 0 26 26"><path d="M0.5 2 H7 L9.5 4 L10.5 3.5 L13 3 L15 2 H24 V15 C23 20 19 21 16 22.5 L13 21 L10.5 22.5 L6 20 L2 18 L0.5 14 Z" fill="#c8c6c4" stroke="#323130" stroke-width="1.2"/><path d="M0.5 2 H7 L9.5 4 L10.5 11 H1 Z" fill="#8cc2ef" stroke="#1a6fc4" stroke-width="1.2"/><path d="M12 11 H24 V15 C23 20 19 21 16 22.5 L11 21 L12 16 Z" fill="#8cc2ef" stroke="#1a6fc4" stroke-width="1.2"/></svg><svg class="r" style="left:1555.3px;top:357.55px" width="26.0" height="26.0" viewBox="0 0 26 26"><path d="M0.5 2 H7 L9.5 4 L10.5 3.5 L13 3 L15 2 H24 V15 C23 20 19 21 16 22.5 L13 21 L10.5 22.5 L6 20 L2 18 L0.5 14 Z" fill="#fafafa" stroke="#323130" stroke-width="1.2"/><path d="M0.5 2 H7 L9.5 4 L10.5 11 H1 M10.5 11 H24 M12 11 L12 16 L11 21" fill="none" stroke="#1a6fc4" stroke-width="1.2"/></svg><svg class="r" style="left:1590.0px;top:357.55px" width="26.0" height="26.0" viewBox="0 0 26 26"><path d="M16.5 -0.8 L1.9 22.3 L14.9 17.2 Z" fill="#3aa0da"/><path d="M16.5 -0.8 L14.9 17.2 L23.3 26.7 Z" fill="#1f78c8"/><path d="M14.9 17.2 L23.3 26.7 L17 20Z" fill="#0b5aa8"/></svg><svg class="r" style="left:1624.7px;top:357.55px" width="26.0" height="26.0" viewBox="0 0 26 26"><path d="M0.5 18.3 A11.5 11.5 0 0 1 23.5 18.3 H19 A7 7 0 0 0 5 18.3 Z" fill="#fafafa" stroke="#323130" stroke-width="1.2"/><path d="M7 8 A11.5 11.5 0 0 1 23.5 18.3 H19 A7 7 0 0 0 9.5 11.5 Z" fill="#8cc2ef" stroke="#1a6fc4" stroke-width="1.3"/><path d="M11 18.5 L17.5 12" stroke="#323130" stroke-width="1.8"/><circle cx="11.5" cy="18" r="1.6" fill="#323130"/></svg><svg class="r" style="left:1451.2px;top:392.3px" width="26.0" height="26.0" viewBox="0 0 26 26"><rect x="0.5" y="3" width="24" height="18.3" fill="#fafafa" stroke="#323130" stroke-width="1.4"/><text x="12.5" y="15" text-anchor="middle" font-family="Liberation Sans" font-size="10" fill="#2b88d8">123</text><path d="M3 18 H22" stroke="#6e6e6e" stroke-width="1"/></svg><svg class="r" style="left:1485.9px;top:392.3px" width="26.0" height="26.0" viewBox="0 0 26 26"><rect x="0" y="0.3" width="24.3" height="24" fill="#fafafa" stroke="#323130" stroke-width="1.4"/><path d="M4.6 4.5 V21" stroke="#6e6e6e" stroke-width="1"/><rect x="6.8" y="5.7" width="13.8" height="2.4" fill="#1a6fc4"/><rect x="6.8" y="13.6" width="13.8" height="2.4" fill="#1a6fc4"/><path d="M6.8 10 H12 M6.8 18.3 H12" stroke="#6e6e6e" stroke-width="1"/></svg><svg class="r" style="left:1520.6000000000001px;top:392.3px" width="26.0" height="26.0" viewBox="0 0 26 26"><rect x="0.7" y="1.9" width="23.6" height="19.6" fill="#fafafa" stroke="#323130" stroke-width="1.4"/><path d="M3 12.5 L6.5 6 L10 12.5 Z" fill="#a8e0a8" stroke="#2e9e48" stroke-width="1"/><path d="M12.5 5.5 H20 L16.3 11.5 Z" fill="#f4a8a8" stroke="#d92c2c" stroke-width="1"/><path d="M3 16.5 H21.5" stroke="#6e6e6e" stroke-width="1"/></svg><svg class="r" style="left:1555.3px;top:392.3px" width="26.0" height="26.0" viewBox="0 0 26 26"><path d="M14 24 H0.5 V0.5 H24.3 V11" fill="#fafafa" stroke="#323130" stroke-width="1.4"/><rect x="1.2" y="1.2" width="22.4" height="2.7" fill="#c8c6c4"/><rect x="4" y="8.5" width="3.8" height="3.5" fill="#c8c6c4" stroke="#6e6e6e" stroke-width=".8"/><rect x="4" y="15.5" width="3.8" height="3.5" fill="#c8c6c4" stroke="#6e6e6e" stroke-width=".8"/><path d="M12.5 12 H23.5 L19.5 17 V22 H16.5 V17 Z" fill="#fff" stroke="#323130" stroke-width="1.3" stroke-linejoin="round"/></svg><svg class="r" style="left:1590.0px;top:392.3px" width="26.0" height="26.0" viewBox="0 0 26 26"><rect x="0.3" y="0.5" width="24.2" height="23.8" fill="#fafafa" stroke="#323130" stroke-width="1.5"/><rect x="1" y="1.2" width="22.8" height="2.8" fill="#c8c6c4"/><path d="M1 10.4 H24 M1 17 H24 M8.8 4 V24 M16 4 V24" stroke="#8a8886" stroke-width="1.1"/></svg><svg class="r" style="left:1624.7px;top:392.3px" width="26.0" height="26.0" viewBox="0 0 26 26"><rect x="0.3" y="0.5" width="24.2" height="23.8" fill="#fafafa" stroke="#323130" stroke-width="1.5"/><rect x="1" y="1.2" width="22.8" height="2.8" fill="#c8c6c4"/><rect x="15.5" y="4" width="8.5" height="20" fill="#8cc2ef"/><rect x="1" y="16.5" width="23" height="7.5" fill="#8cc2ef"/><path d="M1 10.4 H15 M8.8 4 V16.5" stroke="#8a8886" stroke-width="1.1"/><path d="M1 16.5 H24 M15.5 4 V24 M15.5 10.4 H24 M8.8 16.5 V24" stroke="#1a6fc4" stroke-width="1.1"/></svg><svg class="r" style="left:1451.2px;top:427.05px" width="26.0" height="26.0" viewBox="0 0 26 26"><text x="11" y="20.5" text-anchor="middle" font-family="Liberation Sans" font-weight="bold" font-size="21" fill="#2385ca">R</text></svg><svg class="r" style="left:1485.9px;top:427.05px" width="26.0" height="26.0" viewBox="0 0 26 26"><text x="12" y="17" text-anchor="middle" font-family="Liberation Sans" font-weight="bold" font-size="19" fill="#2385ca" letter-spacing="-0.5">Py</text></svg><svg class="r" style="left:1520.6000000000001px;top:427.05px" width="26.0" height="26.0" viewBox="0 0 26 26"><path d="M1 0 V24 H25" fill="none" stroke="#323130" stroke-width="1.4"/><path d="M1 3.6 H19" stroke="#1a6fc4" stroke-width="1.2"/><circle cx="21" cy="3.6" r="2.4" fill="#8cc2ef" stroke="#1a6fc4" stroke-width="1.1"/><path d="M1 10.8 H12.5 M1 16.3 H7.5" stroke="#6e6e6e" stroke-width="1.1"/><circle cx="13.8" cy="10.8" r="1.5" fill="#fff" stroke="#6e6e6e" stroke-width="1"/><circle cx="9" cy="16.3" r="1.5" fill="#fff" stroke="#6e6e6e" stroke-width="1"/></svg><svg class="r" style="left:1555.3px;top:427.05px" width="26.0" height="26.0" viewBox="0 0 26 26"><rect x="-0.3" y="8.8" width="8" height="5.5" fill="#8cc2ef" stroke="#1a6fc4" stroke-width="1.1"/><rect x="15.5" y="0.8" width="8.5" height="5" fill="#8cc2ef" stroke="#1a6fc4" stroke-width="1.1"/><rect x="15.5" y="9" width="8.5" height="5" fill="#8cc2ef" stroke="#1a6fc4" stroke-width="1.1"/><rect x="15.5" y="17.2" width="8.5" height="5" fill="#8cc2ef" stroke="#1a6fc4" stroke-width="1.1"/><path d="M7.7 11.5 H12.5 M12.5 3.3 V19.7 M12.5 3.3 H15.5 M12.5 11.5 H15.5 M12.5 19.7 H15.5" fill="none" stroke="#323130" stroke-width="1.3"/></svg><svg class="r" style="left:1590.0px;top:427.05px" width="26.0" height="26.0" viewBox="0 0 26 26"><path d="M0.8 1.5 H24 V16.3 H10 L4.5 21.5 V16.3 H0.8 Z" fill="#fafafa" stroke="#1a6fc4" stroke-width="1.4" stroke-linejoin="round"/></svg><svg class="r" style="left:1624.7px;top:427.05px" width="26.0" height="26.0" viewBox="0 0 26 26"><path d="M1.5 0.7 H14.5 L19.5 5.7 V23.8 H1.5 Z" fill="#fafafa" stroke="#323130" stroke-width="1.3"/><path d="M14.5 0.7 V5.7 H19.5" fill="none" stroke="#323130" stroke-width="1.1"/><circle cx="1.3" cy="9.3" r="2.1" fill="#8cc2ef" stroke="#1a6fc4" stroke-width="1.1"/><path d="M6 11 H13.5 M7 14.3 H12" stroke="#1a6fc4" stroke-width="1.2"/></svg><svg class="r" style="left:1451.2px;top:461.8px" width="26.0" height="26.0" viewBox="0 0 26 26"><path d="M6 1 H19 V10 C19 14 16 16 12.5 16 C9 16 6 14 6 10 Z" fill="#fafafa" stroke="#323130" stroke-width="1.4"/><path d="M6 2 C1 1 0 5 1.5 8 C2.5 10 5 11 6.5 11 M19 2 C24 1 25 5 23.5 8 C22.5 10 20 11 18.5 11" fill="none" stroke="#323130" stroke-width="1.4"/><rect x="6" y="0.5" width="13" height="2.5" fill="#8cc2ef" stroke="#1a6fc4" stroke-width="1"/><path d="M11 16 L9 21 H16 L14 16" fill="#fafafa" stroke="#323130" stroke-width="1.3"/><rect x="6" y="20.5" width="13" height="3.2" rx="1" fill="#8cc2ef" stroke="#1a6fc4" stroke-width="1"/></svg><svg class="r" style="left:1485.9px;top:461.8px" width="26.0" height="26.0" viewBox="0 0 26 26"><path d="M1 0.5 H13.5 L19 6 V23.5 H1 Z" fill="#fafafa" stroke="#323130" stroke-width="1.4"/><path d="M13.5 0.5 V6 H19" fill="none" stroke="#323130" stroke-width="1"/><rect x="3.8" y="15" width="2.6" height="6" fill="#323130"/><rect x="8.3" y="17.5" width="2.6" height="3.5" fill="#323130"/><rect x="12.5" y="11.5" width="2.6" height="9.5" fill="#323130"/></svg><svg class="r" style="left:1520.6000000000001px;top:461.8px" width="26.0" height="26.0" viewBox="0 0 26 26"><path d="M1.5 9 V21 H24.5 V3.5 H9" fill="#fafafa" stroke="#323130" stroke-width="1.4"/><text x="14" y="15.5" text-anchor="middle" font-family="Liberation Sans" font-size="9.5" fill="#2b88d8">123</text><path d="M4 18.8 H22" stroke="#6e6e6e" stroke-width="1"/><path d="M4 0.5 H10.5 L7 5.5 H10 L1 13 L3.5 7 H0.5 Z" fill="#f7a81b" stroke="#d96d0a" stroke-width="0.9" stroke-linejoin="round"/></svg><svg class="r" style="left:1555.3px;top:461.8px" width="26.0" height="26.0" viewBox="0 0 26 26"><rect x="2" y="12" width="7.5" height="7.5" fill="#fafafa" stroke="#6e6e6e" stroke-width="1.1"/><rect x="12" y="1.5" width="8.5" height="7.5" fill="#fafafa" stroke="#6e6e6e" stroke-width="1.1"/><path d="M10 7 L10 10.5 H7 Z" fill="#1a6fc4"/><path d="M4 0.5 H10.5 L7 5.5 H10 L1 13 L3.5 7 H0.5 Z" fill="#f7a81b" stroke="#d96d0a" stroke-width="0.9" stroke-linejoin="round"/><path d="M12.5 12.5 H23.5 L19.5 17.5 V22.5 H16.5 V17.5 Z" fill="#fff" stroke="#323130" stroke-width="1.3" stroke-linejoin="round"/></svg><svg class="r" style="left:1590.0px;top:461.8px" width="26.0" height="26.0" viewBox="0 0 26 26"><path d="M1.5 9 V22.5 H15 M24.5 13 V2 H10" fill="none" stroke="#323130" stroke-width="1.4"/><path d="M7 19 L11.5 5.5 L16 16" fill="none" stroke="#2b88d8" stroke-width="1.1"/><path d="M4 0.5 H10.5 L7 5.5 H10 L1 13 L3.5 7 H0.5 Z" fill="#f7a81b" stroke="#d96d0a" stroke-width="0.9" stroke-linejoin="round"/><path d="M12.5 13 H23.5 L19.5 18 V23 H16.5 V18 Z" fill="#fff" stroke="#323130" stroke-width="1.3" stroke-linejoin="round"/></svg><svg class="r" style="left:1624.7px;top:461.8px" width="26.0" height="26.0" viewBox="0 0 26 26"><path d="M1.5 9 V22.5 H15 M24.5 13 V2 H10" fill="none" stroke="#323130" stroke-width="1.4"/><path d="M11.5 7 H21" stroke="#6e6e6e" stroke-width="1.1"/><rect x="5" y="15" width="2.5" height="2.5" fill="none" stroke="#6e6e6e" stroke-width="1"/><path d="M8.5 16.3 H12" stroke="#6e6e6e" stroke-width="1" stroke-dasharray="1 1"/><path d="M4 0.5 H10.5 L7 5.5 H10 L1 13 L3.5 7 H0.5 Z" fill="#f7a81b" stroke="#d96d0a" stroke-width="0.9" stroke-linejoin="round"/><path d="M12.5 13 H23.5 L19.5 18 V23 H16.5 V18 Z" fill="#fff" stroke="#323130" stroke-width="1.3" stroke-linejoin="round"/></svg><svg class="r" style="left:1451.2px;top:496.55px" width="26.0" height="26.0" viewBox="0 0 26 26"><path d="M3 10 V24 H24 V1.5 H8" fill="#fff" stroke="#1f78c8" stroke-width="1.6"/><path d="M10 9 L12 6 L20 5 L19 11 L16 14 L15 18 L11 21 L7 21 L6 16 Z" fill="#8cc2ef"/><path d="M-0.3 2 C-0.3 0 1.5 -0.5 3.5 -0.5 C5.5 -0.5 7.3 0 7.3 2 V9 L3.5 13.5 L-0.3 9 Z" fill="#e0721f"/><circle cx="3.5" cy="4.5" r="1.6" fill="#fff"/><circle cx="21" cy="15" r="2" fill="#e0721f"/><circle cx="18.3" cy="21.5" r="3.5" fill="#e0721f"/></svg><svg class="r" style="left:1485.9px;top:496.55px" width="26.0" height="26.0" viewBox="0 0 26 26"><path d="M10.5 1.5 L22.5 12.5 L12.5 23 L0.5 12 Z" fill="none" stroke="#8b2fb0" stroke-width="1.4" stroke-linejoin="round"/><path d="M10.5 1.5 L12.5 1.5 L24.5 12.5 L14.5 23 H12.5 M6.5 6.8 L17.5 17.8 M16.5 6.8 L5.5 17.8" fill="none" stroke="#8b2fb0" stroke-width="1.3" stroke-linejoin="round"/></svg><svg class="r" style="left:1520.6000000000001px;top:496.55px" width="26.0" height="26.0" viewBox="0 0 26 26"><path d="M1.5 2.5 H13 L22 12 L13 21.5 H1.5 L10 12 Z" fill="#fff" stroke="#1f78e8" stroke-width="1.5" stroke-linejoin="round"/><path d="M10 12 H17 M6.5 21.5 L17 12" fill="none" stroke="#1f78e8" stroke-width="1.3"/></svg><svg class="r" style="left:1555.3px;top:496.55px" width="26.0" height="26.0" viewBox="0 0 26 26"><circle cx="4" cy="11" r="1.2" fill="#252423"/><circle cx="12" cy="11" r="1.2" fill="#252423"/><circle cx="20" cy="11" r="1.2" fill="#252423"/></svg><svg class="r" style="left:831.0px;top:67.3px" width="22.9" height="22.9" viewBox="0 0 26 26"><path d="M1 0 V24 H25" fill="none" stroke="#323130" stroke-width="1.4"/><rect x="1.5" y="3" width="6" height="6" fill="#fafafa" stroke="#6e6e6e" stroke-width="1.1"/><rect x="7.5" y="3" width="9" height="6" fill="#8cc2ef" stroke="#1a6fc4" stroke-width="1.1"/><rect x="1.5" y="14.3" width="9" height="5.6" fill="#fafafa" stroke="#6e6e6e" stroke-width="1.1"/><rect x="10.5" y="14.3" width="11.5" height="5.6" fill="#c8c6c4" stroke="#6e6e6e" stroke-width="1.1"/></svg><svg class="r" style="left:865.8px;top:67.3px" width="22.9" height="22.9" viewBox="0 0 26 26"><path d="M1 0 V24 H25" fill="none" stroke="#323130" stroke-width="1.4"/><rect x="4.2" y="16" width="6.5" height="7.7" fill="#fafafa" stroke="#6e6e6e" stroke-width="1.1"/><rect x="4.2" y="7" width="6.5" height="9" fill="#8cc2ef" stroke="#1a6fc4" stroke-width="1.1"/><rect x="15.2" y="14.7" width="5.8" height="9" fill="#fafafa" stroke="#6e6e6e" stroke-width="1.1"/><rect x="15.2" y="3.1" width="5.8" height="11.6" fill="#c8c6c4" stroke="#6e6e6e" stroke-width="1.1"/></svg><svg class="r" style="left:900.6px;top:67.3px" width="22.9" height="22.9" viewBox="0 0 26 26"><rect x="1" y="1.2" width="22.2" height="4.9" fill="#8cc2ef" stroke="#1a6fc4" stroke-width="1.1"/><rect x="1" y="6.1" width="13.2" height="4.9" fill="#fafafa" stroke="#6e6e6e" stroke-width="1.1"/><rect x="1" y="11" width="9.9" height="5.5" fill="#c8c6c4" stroke="#6e6e6e" stroke-width="1.1"/><rect x="1" y="16.5" width="17.2" height="5" fill="#fafafa" stroke="#6e6e6e" stroke-width="1.1"/><path d="M1 0 V24 H25" fill="none" stroke="#555" stroke-width="1.3"/></svg><svg class="r" style="left:935.4px;top:67.3px" width="22.9" height="22.9" viewBox="0 0 26 26"><path d="M1 0 V24 H25" fill="none" stroke="#323130" stroke-width="1.4"/><rect x="2.3" y="1.2" width="5.1" height="22.5" fill="#8cc2ef" stroke="#1a6fc4" stroke-width="1.1"/><rect x="7.4" y="10.2" width="4.8" height="13.5" fill="#fafafa" stroke="#6e6e6e" stroke-width="1.1"/><rect x="12.2" y="13.7" width="4.8" height="10" fill="#c8c6c4" stroke="#6e6e6e" stroke-width="1.1"/><rect x="17" y="7.3" width="5" height="16.4" fill="#fafafa" stroke="#6e6e6e" stroke-width="1.1"/></svg><svg class="r" style="left:970.2px;top:67.3px" width="22.9" height="22.9" viewBox="0 0 26 26"><path d="M1 0 V24 H25" fill="none" stroke="#323130" stroke-width="1.4"/><rect x="4.4" y="20.2" width="6.2" height="3.5" fill="#fafafa" stroke="#6e6e6e" stroke-width="1.1"/><rect x="4.4" y="5" width="6.2" height="15.2" fill="#8cc2ef" stroke="#1a6fc4" stroke-width="1.1"/><rect x="15" y="12.3" width="6" height="11.4" fill="#fafafa" stroke="#6e6e6e" stroke-width="1.1"/><rect x="15" y="5" width="6" height="7.3" fill="#c8c6c4" stroke="#6e6e6e" stroke-width="1.1"/><path d="M0.3 23.8 L9.3 13.1 L15.5 18.7 L23.3 10.8" fill="none" stroke="#323130" stroke-width="1.4"/></svg><svg class="r" style="left:1005.0px;top:67.3px" width="22.9" height="22.9" viewBox="0 0 26 26"><path d="M1 0 V24 H25" fill="none" stroke="#323130" stroke-width="1.4"/><rect x="4.1" y="11.6" width="6.2" height="12.1" fill="#8cc2ef" stroke="#1a6fc4" stroke-width="1.1"/><rect x="10.3" y="2.6" width="6.2" height="21.1" fill="#fafafa" stroke="#323130" stroke-width="1.1"/><rect x="16.5" y="7.7" width="6" height="16" fill="#c8c6c4" stroke="#6e6e6e" stroke-width="1.1"/><path d="M0.5 23.8 L9.5 12.6 L15.1 18.2 L23 10.8" fill="none" stroke="#323130" stroke-width="1.4"/></svg><svg class="r" style="left:1039.8px;top:67.3px" width="22.9" height="22.9" viewBox="0 0 26 26"><path d="M1 0 V24 H25" fill="none" stroke="#323130" stroke-width="1.4"/><path d="M1 14.3 L8.9 5.3 L15.1 13.1 L23.5 4.7" fill="none" stroke="#323130" stroke-width="1.4"/><path d="M1 18.7 L15.1 4.7 L23.5 13.1" fill="none" stroke="#1a6fc4" stroke-width="1.4"/></svg><svg class="r" style="left:1074.6px;top:67.3px" width="22.9" height="22.9" viewBox="0 0 26 26"><path d="M0.2 14.8 L7.5 1.9 L14.3 9.8" fill="#fafafa" stroke="#323130" stroke-width="1.3"/><path d="M14.3 9.8 L18.7 0.8 L23.8 11.5 V23.8 Z" fill="#c8c6c4" stroke="#6e6e6e" stroke-width="1.1"/><path d="M0.5 15 L6.5 21 L14.3 10.3 L23.8 23.8 H0.5 Z" fill="#8cc2ef" stroke="#1a6fc4" stroke-width="1.4"/></svg><svg class="r" style="left:1109.4px;top:67.3px" width="22.9" height="22.9" viewBox="0 0 26 26"><path d="M14 24 H0.5 V0.5 H24.3 V11" fill="#fafafa" stroke="#323130" stroke-width="1.4"/><rect x="1.2" y="1.2" width="22.4" height="2.7" fill="#c8c6c4"/><rect x="4" y="8.5" width="3.8" height="3.5" fill="#c8c6c4" stroke="#6e6e6e" stroke-width=".8"/><rect x="4" y="15.5" width="3.8" height="3.5" fill="#c8c6c4" stroke="#6e6e6e" stroke-width=".8"/><path d="M12.5 12 H23.5 L19.5 17 V22 H16.5 V17 Z" fill="#fff" stroke="#323130" stroke-width="1.3" stroke-linejoin="round"/></svg><svg class="r" style="left:831.0px;top:107.0px" width="22.9" height="22.9" viewBox="0 0 26 26"><circle cx="12" cy="12" r="11.5" fill="#fafafa" stroke="#323130" stroke-width="1.4"/><path d="M12 12 V0.5 A11.5 11.5 0 0 1 19.8 20.5 Z" fill="#8cc2ef" stroke="#1a6fc4" stroke-width="1.4" stroke-linejoin="round"/></svg><svg class="r" style="left:865.8px;top:107.0px" width="22.9" height="22.9" viewBox="0 0 26 26"><circle cx="12" cy="12" r="8.5" fill="none" stroke="#8cc2ef" stroke-width="6"/><path d="M0.5 12 A11.5 11.5 0 0 1 12 0.5 M3.5 12 A8.5 8.5 0 0 1 12 3.5" fill="none" stroke="#6e6e6e" stroke-width="1.1"/><path d="M0.5 12 A11.5 11.5 0 0 1 12 0.5 L12 6 A6 6 0 0 0 6 12 Z" fill="#fafafa"/><path d="M12 0.5 A11.5 11.5 0 1 1 0.5 12 M12 6 A6 6 0 1 1 6 12" fill="none" stroke="#1a6fc4" stroke-width="1.4"/><path d="M0.5 12 H6 M12 0.5 V6" stroke="#1a6fc4" stroke-width="1.2"/></svg><svg class="r" style="left:900.6px;top:107.0px" width="22.9" height="22.9" viewBox="0 0 26 26"><rect x="0.5" y="0.5" width="24" height="24" fill="#fafafa" stroke="#323130" stroke-width="1.4"/><rect x="0.5" y="0.5" width="11.8" height="12.5" fill="#8cc2ef" stroke="#1a6fc4" stroke-width="1.3"/><rect x="0.5" y="13" width="11.8" height="11.5" fill="#8cc2ef" stroke="#1a6fc4" stroke-width="1.3"/><path d="M12.3 6.5 H24.5 M16.5 6.5 V24.5 M16.5 15 H24.5" stroke="#6e6e6e" stroke-width="1.2"/></svg><svg class="r" style="left:935.4px;top:107.0px" width="22.9" height="22.9" viewBox="0 0 26 26"><circle cx="13.5" cy="12.6" r="7.6" fill="#fff" stroke="#323130" stroke-width="1.3"/><path d="M9 9 C11 7 14 8 13 11 C12 13 10 12 9 14 C8 12 8 10 9 9Z M15 13 C17 12 19 13 19 15 C18 18 16 19 15 17 Z M14 6 C16 5 18 6 18 8 L16 9Z" fill="#2e9e48"/><path d="M8 1.5 C1 5 1 19 10 22 C14 23 18 22 20.5 19.5" fill="none" stroke="#323130" stroke-width="1.3"/><path d="M12 22.5 V24.3 M4 24.5 H21" stroke="#323130" stroke-width="1.3"/></svg><svg class="r" style="left:970.2px;top:107.0px" width="22.9" height="22.9" viewBox="0 0 26 26"><path d="M0.5 18.3 A11.5 11.5 0 0 1 23.5 18.3 H19 A7 7 0 0 0 5 18.3 Z" fill="#fafafa" stroke="#323130" stroke-width="1.2"/><path d="M7 8 A11.5 11.5 0 0 1 23.5 18.3 H19 A7 7 0 0 0 9.5 11.5 Z" fill="#8cc2ef" stroke="#1a6fc4" stroke-width="1.3"/><path d="M11 18.5 L17.5 12" stroke="#323130" stroke-width="1.8"/><circle cx="11.5" cy="18" r="1.6" fill="#323130"/></svg><svg class="r" style="left:1005.0px;top:107.0px" width="22.9" height="22.9" viewBox="0 0 26 26"><rect x="0.5" y="3" width="24" height="18.3" fill="#fafafa" stroke="#323130" stroke-width="1.4"/><text x="12.5" y="15" text-anchor="middle" font-family="Liberation Sans" font-size="10" fill="#2b88d8">123</text><path d="M3 18 H22" stroke="#6e6e6e" stroke-width="1"/></svg><svg class="r" style="left:1039.8px;top:107.0px" width="22.9" height="22.9" viewBox="0 0 26 26"><rect x="0" y="0.3" width="24.3" height="24" fill="#fafafa" stroke="#323130" stroke-width="1.4"/><path d="M4.6 4.5 V21" stroke="#6e6e6e" stroke-width="1"/><rect x="6.8" y="5.7" width="13.8" height="2.4" fill="#1a6fc4"/><rect x="6.8" y="13.6" width="13.8" height="2.4" fill="#1a6fc4"/><path d="M6.8 10 H12 M6.8 18.3 H12" stroke="#6e6e6e" stroke-width="1"/></svg><svg class="r" style="left:1074.6px;top:107.0px" width="22.9" height="22.9" viewBox="0 0 26 26"><rect x="0.3" y="0.5" width="24.2" height="23.8" fill="#fafafa" stroke="#323130" stroke-width="1.5"/><rect x="1" y="1.2" width="22.8" height="2.8" fill="#c8c6c4"/><path d="M1 10.4 H24 M1 17 H24 M8.8 4 V24 M16 4 V24" stroke="#8a8886" stroke-width="1.1"/></svg><svg class="r" style="left:1109.4px;top:107.0px" width="22.9" height="22.9" viewBox="0 0 26 26"><rect x="0.3" y="0.5" width="24.2" height="23.8" fill="#fafafa" stroke="#323130" stroke-width="1.5"/><rect x="1" y="1.2" width="22.8" height="2.8" fill="#c8c6c4"/><rect x="15.5" y="4" width="8.5" height="20" fill="#8cc2ef"/><rect x="1" y="16.5" width="23" height="7.5" fill="#8cc2ef"/><path d="M1 10.4 H15 M8.8 4 V16.5" stroke="#8a8886" stroke-width="1.1"/><path d="M1 16.5 H24 M15.5 4 V24 M15.5 10.4 H24 M8.8 16.5 V24" stroke="#1a6fc4" stroke-width="1.1"/></svg><div class="r" style="left:0px;top:167.5px;width:1917px;height:5px;background:linear-gradient(rgba(0,0,0,.09),rgba(0,0,0,0));"></div>
</body></html>
